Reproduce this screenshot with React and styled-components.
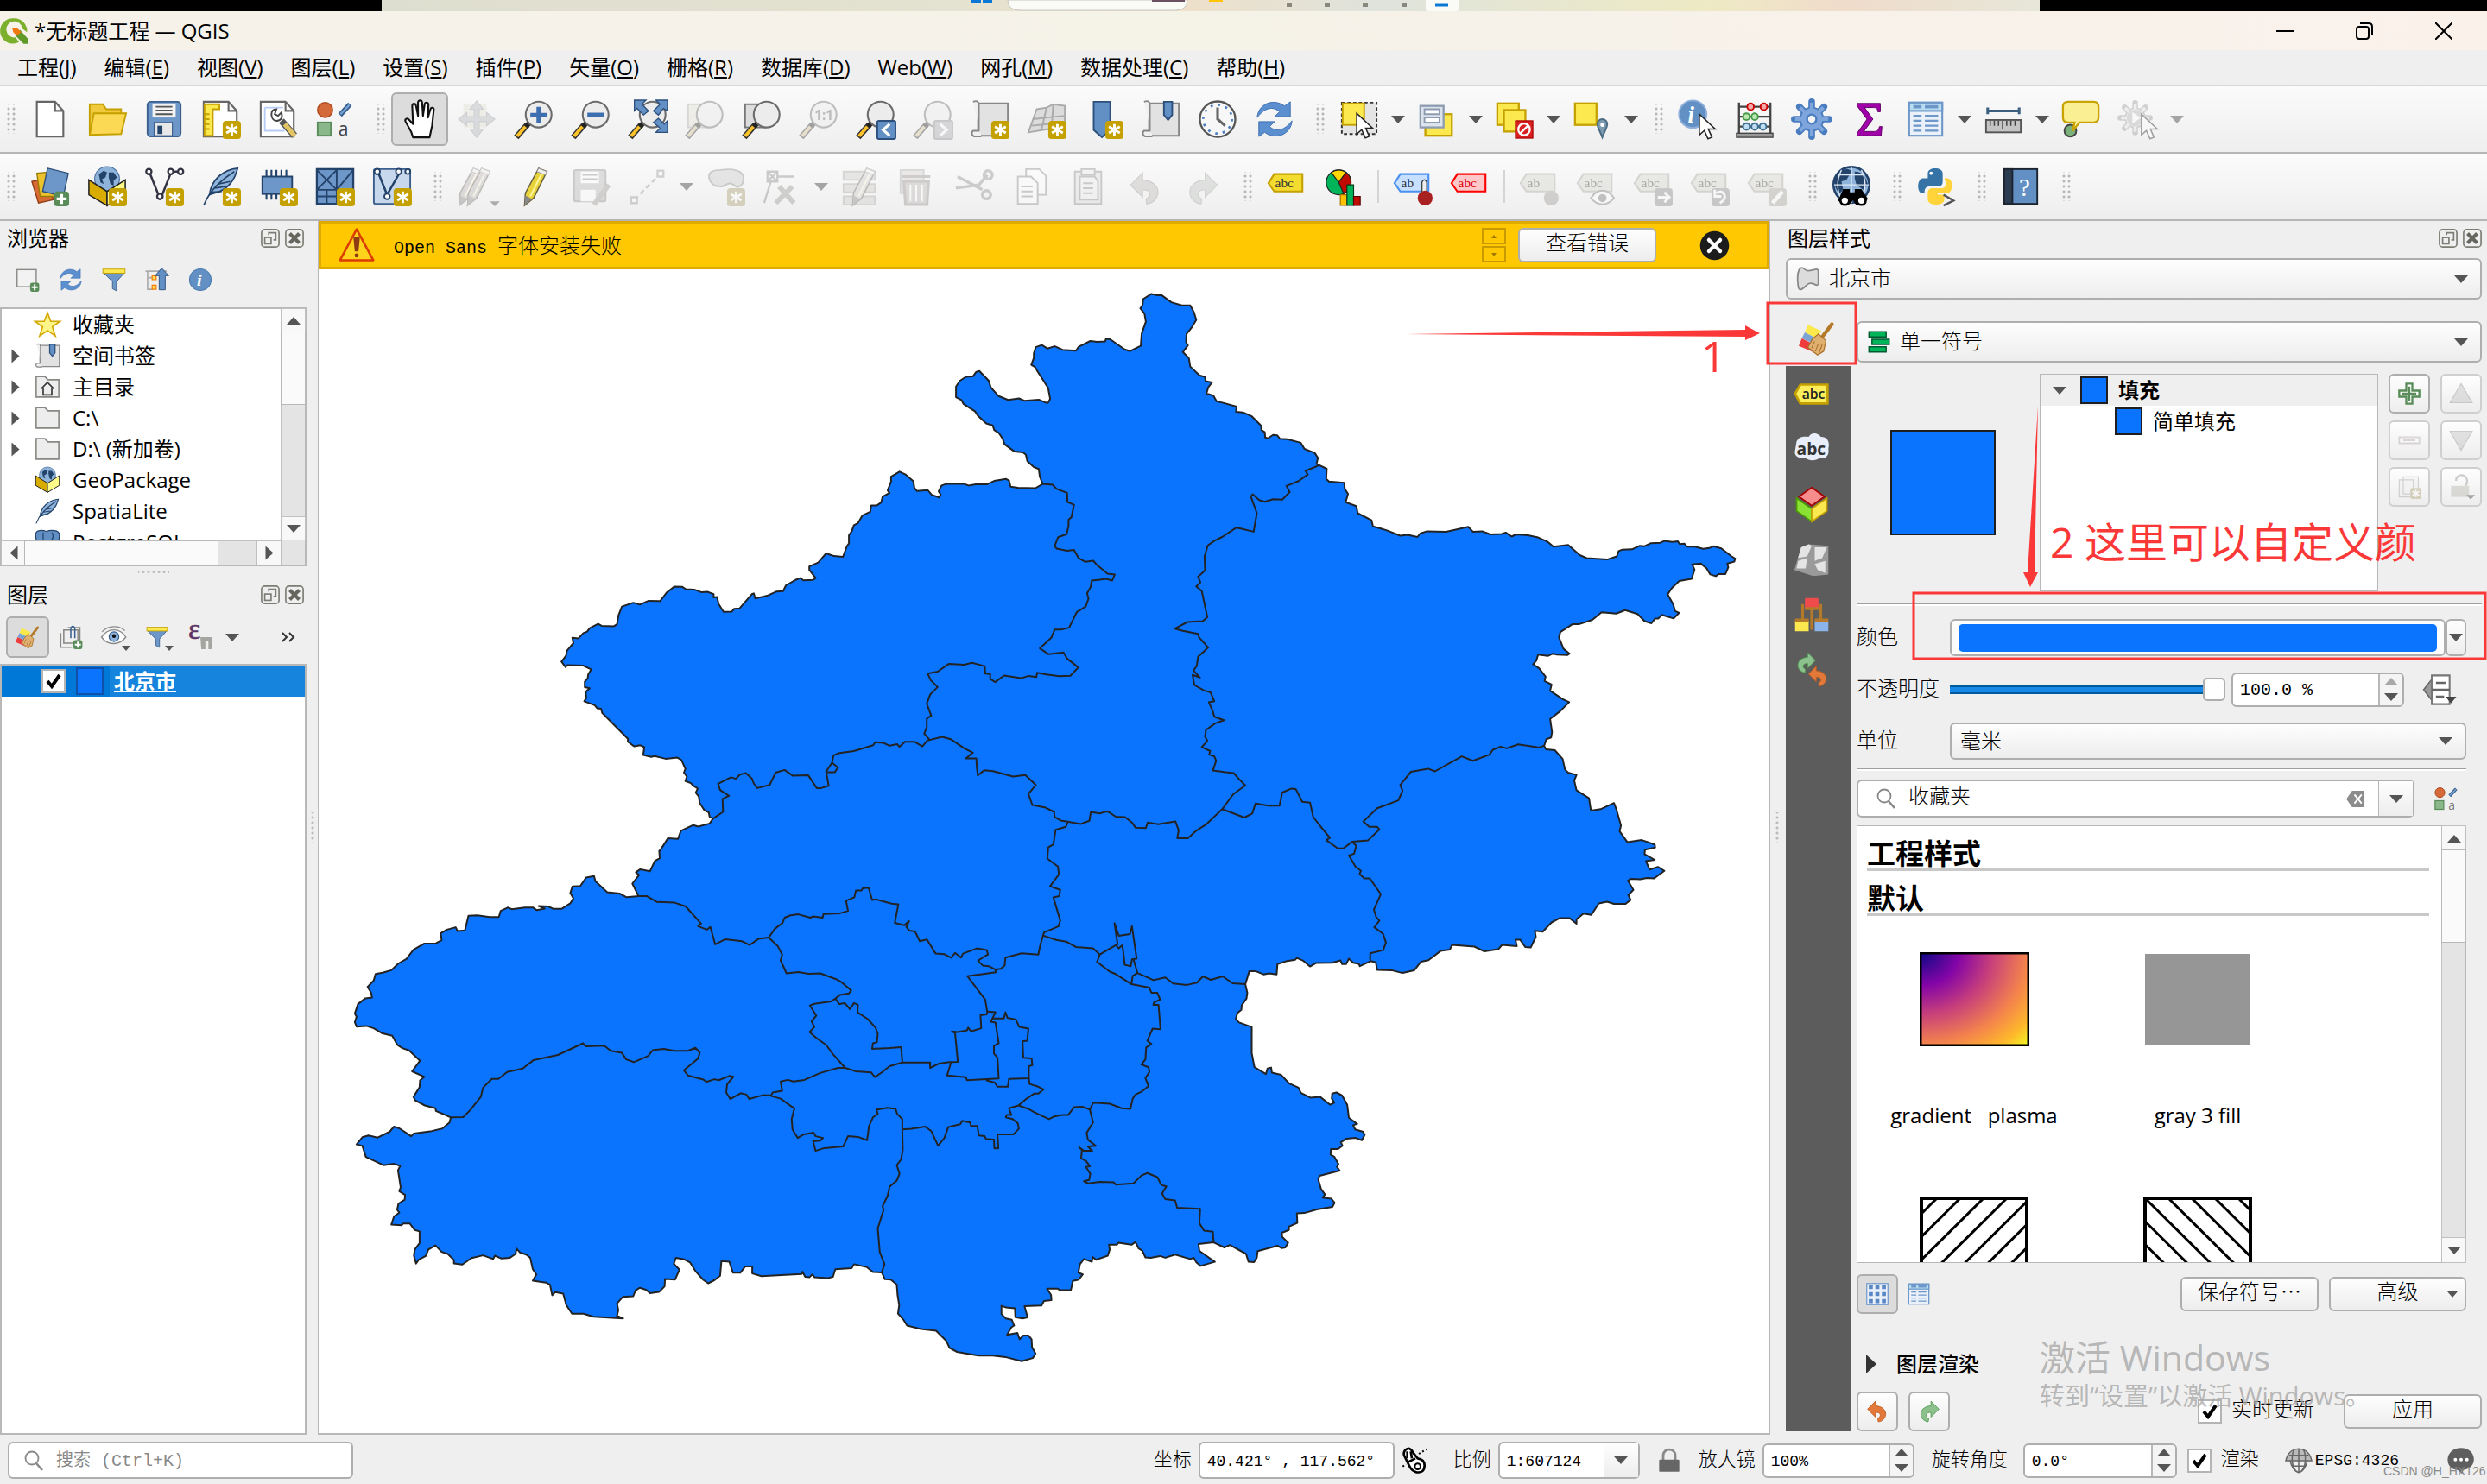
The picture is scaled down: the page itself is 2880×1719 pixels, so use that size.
import React, { useState } from "react";
import styled, { createGlobalStyle, css } from "styled-components";

const FILL = "#0a74ff";
const UI = `"Open Sans", "Noto Sans CJK SC", sans-serif`;
const FORM = `"Liberation Mono", "Noto Sans CJK SC", monospace`;

/* ---------- map data ---------- */

const sheets = {
  a: [380, 320, 900 / 1568, 700 / 1568],
  b: [1200, 320, 840 / 1568, 800 / 1568],
  c: [390, 980, 800 / 1568, 620 / 1568],
  d: [880, 980, 720 / 1568, 620 / 1568],
};

const outline = [
  ["a", "775,1407 768,1403 766,1391 757,1385 748,1367 746,1350 740,1340 744,1329 735,1322 730,1315 719,1310 722,1298 716,1288 719,1278 711,1255 703,1249 679,1252 657,1245 650,1247 634,1242 636,1222 628,1217 616,1220 603,1208 603,1200 551,1133 549,1122 541,1121 536,1113 515,1103 519,1095 518,1078 526,1069 516,1066 516,1052 522,1043 523,1033 529,1020 512,1010 481,1009 477,1014 469,1000 478,985 480,972 493,952 491,938 503,940 513,926 521,922 526,913 543,902 550,907 575,908 581,903 584,880 591,857 614,847 627,852 645,842 668,843 681,821 697,805 713,806 720,812 737,813 752,820 764,819 776,825 776,833 783,832 786,850 796,871 813,870 817,863 828,862 853,825 857,823 860,836 884,829 903,818 916,817 922,802 941,788 951,783 957,789 976,788 982,783 969,762 969,753 987,743 1003,719 1019,726 1037,728 1045,700 1049,693 1049,672 1055,661 1059,646 1067,641 1076,621 1092,611 1094,595 1105,595 1114,587 1117,572 1131,562 1127,556 1134,533 1134,520 1151,507 1164,515 1179,532 1181,549 1186,557 1208,555 1216,567 1231,574 1234,566 1230,558 1236,543 1245,539 1282,539 1290,543 1305,540 1327,540 1342,531 1366,526 1372,530 1375,546 1390,549 1425,550 1440,539 1434,520 1432,500 1422,495 1409,480 1406,463 1400,457 1383,455 1363,436 1359,421 1351,406 1342,399 1339,387 1326,382 1310,363 1303,350 1280,331 1276,321 1265,314 1265,286 1273,271 1285,261 1299,260 1306,248 1312,246 1331,271 1335,288 1351,311 1370,321 1392,317 1403,323 1432,320 1446,328 1451,328 1455,318 1451,290 1441,270 1430,248 1425,236 1417,230 1422,212 1422,200 1426,184"],
  ["b", "10,156 22,164 38,159 55,167 84,169 90,160 115,147 130,149 147,148 149,142 158,143 189,166 201,170 224,158 226,130 235,103 232,85 223,73 228,65 229,52 247,40 260,43 269,43 290,59 313,66 331,66 339,82 344,99 333,118 323,131 322,150 326,157 315,172 328,186 331,205 351,225 363,229 364,238 378,241 370,252 366,266 381,271 388,284 404,288 431,296 430,308 445,309 464,318 484,339 485,349 492,354 493,366 499,368 510,360 519,361 525,369 541,370 570,378 578,392 600,401 607,412 604,426 626,437 625,460 631,466 664,469 665,483 672,494 667,513 690,522 693,538 723,554 726,568 743,573 756,577 785,589 801,587 822,592 828,584 843,579 884,580 901,576 932,569 942,580 962,579 980,586 1004,585 1013,582 1026,591 1035,586 1061,588 1083,593 1104,603 1116,614 1148,610 1173,633 1188,640 1232,643 1253,636 1257,624 1264,621 1286,620 1303,612 1312,613 1327,606 1347,605 1356,601 1373,603 1385,602 1389,608 1399,607 1405,614 1422,614 1440,619 1453,617 1462,613 1479,618 1500,635 1509,641 1507,648 1492,652 1494,661 1488,676 1474,676 1467,681 1455,677 1447,663 1440,657 1435,652 1416,654 1421,666 1415,687 1388,692 1372,708 1363,722 1375,745 1379,760 1388,764 1376,777 1350,769 1343,777 1336,777 1328,788 1313,783 1298,767 1271,758 1252,766 1220,763 1200,780 1171,790 1157,790 1131,808 1128,820 1138,846 1151,857 1146,860 1124,859 1115,857 1104,862 1083,859 1079,873 1072,881 1085,890 1099,909 1097,919 1112,927 1109,941 1136,960 1150,967 1131,987 1109,1005 1113,1035 1111,1047 1101,1051 1096,1066 1100,1074 1119,1076 1136,1096 1141,1120 1148,1127 1166,1132 1161,1145 1166,1167 1193,1185 1197,1213 1218,1210 1247,1196 1252,1210 1262,1247 1259,1260 1276,1285 1307,1280 1335,1290 1336,1297 1314,1302 1313,1312 1335,1325 1316,1328 1324,1347 1342,1341 1356,1350 1334,1367 1318,1366 1304,1369 1283,1368 1277,1372 1289,1393 1278,1405 1283,1416 1272,1425 1247,1425 1232,1420 1214,1424 1198,1450 1181,1447 1166,1460 1166,1470 1151,1457 1130,1457 1112,1467 1093,1488 1076,1486 1078,1500 1067,1524 1055,1523 1044,1506 1034,1506 1037,1521 1005,1518 997,1528 967,1533 945,1522 897,1518 892,1529 872,1532 846,1553 830,1556 815,1576 790,1582 768,1576 735,1575"],
  ["d", "1554,360 1551,341 1538,337 1511,352 1508,345 1494,342 1483,330 1476,346 1466,346 1462,335 1441,342 1400,343 1385,353 1368,336 1352,328 1348,333 1324,338 1303,346 1301,376 1282,373 1268,376 1249,367 1232,367 1222,405 1227,430 1225,447 1213,466 1212,480 1202,489 1198,507 1206,517 1238,530 1238,607 1245,648 1274,668 1278,652 1287,649 1289,664 1312,670 1332,695 1356,708 1362,723 1386,737 1411,735 1436,758 1446,752 1440,740 1441,725 1452,722 1466,731 1479,758 1483,796 1504,814 1494,818 1499,830 1519,837 1523,846 1516,862 1500,855 1477,857 1463,868 1467,878 1455,888 1438,888 1437,904 1447,911 1457,932 1453,940 1460,951 1409,966 1406,977 1413,1005 1423,1021 1417,1030 1439,1033 1447,1045 1442,1057 1405,1064 1371,1075 1352,1076 1353,1104 1332,1115 1332,1125 1314,1133 1315,1145 1330,1162 1323,1176 1314,1178 1303,1171 1253,1187 1251,1206 1244,1219 1230,1218 1224,1195 1183,1169 1169,1176 1142,1161 1104,1166 1106,1186 1145,1218 1109,1230 1098,1219 1092,1206 1083,1210 1045,1197 1020,1206 1007,1201 983,1206 970,1205 962,1185 953,1179 945,1160 935,1168 902,1162 898,1168 878,1168 880,1182 875,1200 846,1212 837,1204 835,1218 815,1210 805,1225 801,1250 812,1255 802,1270 787,1274 782,1301 754,1301 749,1297 722,1297 732,1315 733,1330 714,1333 708,1346 665,1348 673,1381 660,1384 642,1380 641,1354 619,1352 607,1347 607,1371 618,1384 633,1388 639,1405 632,1410 621,1432 647,1426 653,1445 662,1434 675,1434 683,1445 684,1468 693,1487 686,1500 658,1509 617,1497 585,1493 549,1493 520,1487 495,1482 476,1470 468,1450 442,1420 404,1415 369,1405 360,1388 346,1370 349,1345 345,1315 343,1285 328,1270 313,1269 305,1249 283,1248 268,1234 235,1225 229,1237 188,1240 182,1262 168,1266 135,1263 130,1255 123,1263 112,1262 105,1247 103,1254"],
  ["c", "962,1260 941,1252 941,1232 925,1232 914,1250 897,1250 889,1218 871,1216 868,1259 855,1272 841,1281 829,1270 812,1245 800,1220 787,1211 768,1206 763,1224 776,1241 766,1270 743,1268 742,1290 730,1306 709,1310 700,1300 686,1294 676,1302 671,1319 647,1321 634,1340 637,1360 634,1376 648,1384 581,1379 558,1370 532,1370 519,1345 512,1311 494,1307 487,1316 482,1285 473,1279 443,1273 451,1255 443,1240 437,1206 428,1197 414,1191 406,1179 404,1195 391,1206 371,1208 357,1200 353,1210 330,1199 304,1207 283,1226 264,1223 264,1213 250,1195 236,1189 222,1170 206,1182 200,1201 184,1212 178,1223 173,1200 175,1182 186,1163 186,1129 175,1125 164,1106 149,1106 145,1111 122,1109 128,1085 140,1074 135,1065 138,1048 152,1036 153,1022 140,1011 143,1000 137,950 142,937 128,931 104,935 64,911 56,878 43,874 56,853 70,848 91,854 118,837 128,822 140,827 167,850 173,842 210,836 237,828 254,810 257,795 223,776 222,768 198,760 176,745 172,735 186,706 187,687 197,676 169,660 187,629 162,599 147,592 135,582 124,556 100,548 82,534 65,527 43,529 39,516 43,500 39,491 46,463 63,446 78,444 76,430 68,413 82,394 86,375 102,371 122,364 138,344 156,331 172,304 196,286 223,285 236,276 234,256 248,245 268,238 272,249 289,247 297,204 317,203 345,208 366,208 370,190 387,180 395,185 425,180 443,180 452,188 470,183 456,176 478,177 490,184 508,184 528,168 535,153 528,138 533,118 551,117 564,92 582,88 585,103 612,135 640,139 656,150 683,147 669,110 684,85 677,77 687,68 709,74 720,44 731,36 730,14"],
  ["a", "667,1492 684,1458 704,1460 710,1439 735,1424 745,1428 768,1420 775,1407"],
];

const districts = [
  [
    ["a", "1440,539 1460,541 1468,552 1489,562 1490,586 1503,593 1498,625 1492,632 1492,648 1488,669 1471,677 1464,700 1468,707 1489,712 1503,710 1512,731 1526,741 1542,738 1550,750 1568,769"],
    ["b", "152,675 168,677 162,691 150,687 118,691 116,705 108,720 111,732 105,750 86,762 69,798 52,802 38,802 31,820 6,845 25,858 57,854 65,868 89,888 72,907 48,908 20,904 0,900"],
    ["a", "1427,1040 1412,1037 1396,1043 1362,1036 1344,1053 1334,1045 1334,1032 1324,1031 1323,1012 1310,1007 1297,1003 1282,1008 1250,1006 1228,1026 1208,1031 1214,1048 1228,1066 1213,1085 1206,1109 1215,1140 1206,1148 1206,1170 1201,1187 1212,1203 1207,1205 1197,1220 1182,1208 1162,1208 1151,1221 1146,1214 1131,1218 1119,1211 1102,1209 1098,1217 1059,1232 1030,1237 1018,1243 1015,1262 1003,1285 1008,1322 993,1328 984,1328 967,1295 936,1296 919,1281 901,1288 889,1320 864,1328 857,1316 853,1303 841,1289 829,1293 821,1304 811,1300 785,1317 789,1333 807,1348 794,1356 795,1390 775,1407"],
  ],
  [["a", "1015,1262 1027,1275 1020,1287 1003,1287"]],
  [
    ["a", "1212,1203 1237,1195 1254,1201 1282,1225 1299,1236 1285,1251 1306,1251 1307,1275 1309,1295 1322,1282 1340,1284 1380,1298 1405,1294 1426,1320 1411,1343 1419,1372 1444,1378 1463,1390 1464,1403 1476,1412 1490,1415 1517,1421 1534,1413 1537,1390 1555,1394 1568,1389"],
    ["b", "154,1216 170,1227 190,1228 205,1240 213,1252 235,1253 239,1240 262,1244 299,1238 306,1258 303,1276 326,1276 345,1258 365,1245 400,1210 424,1176 450,1156 435,1140 425,1128 408,1126 380,1122 387,1100 383,1090 372,1086 374,1078 356,1069 368,1055 363,1045 365,1030 385,1015 404,1008 383,1000 379,985 371,967 383,965 375,945 360,940 340,928 336,905 352,911 338,895 345,885 348,864 370,843 350,820 348,812 315,805 298,800 325,785 358,783 368,774 360,735 356,715 344,704 353,695 348,682 363,668 362,636 369,611 384,600 400,592 430,571 440,573 468,580 475,538 462,500 466,495 480,508 492,512 510,506 530,507 546,490 539,476 565,465 585,450 580,442 608,430"],
  ],
  [["b", "400,1210 448,1229 465,1220 472,1197 500,1202 524,1202 530,1172 550,1163 559,1164 573,1193 590,1195 597,1228 615,1252 633,1275 625,1280 650,1299 662,1299 681,1284 715,1281 740,1256 735,1250 718,1250 705,1238 735,1208 781,1190 790,1168 785,1155 808,1125 845,1118 860,1124 918,1090 942,1100 978,1086 985,1075 1002,1068 1015,1072 1040,1063 1085,1070 1096,1066"]],
  [["b", "681,1284 690,1293 685,1311 674,1315 688,1340 700,1350 697,1357 707,1367 719,1367 743,1403 728,1438 733,1455 740,1463 729,1478 748,1493 754,1513 748,1530 720,1537 720,1553"]],
  [
    ["b", "66,1240 62,1250 40,1257 35,1290 24,1297 22,1322 45,1340 47,1358 28,1385 50,1393 48,1407 35,1410 50,1463 46,1476 15,1490"],
    ["d", "712,262 705,290 700,318 658,314 617,327 615,350 605,360 592,362 575,352 560,350 548,336 558,328 573,318 570,305 545,300 510,315 505,327 490,313 480,327 463,317 441,315 419,274 401,279 389,250 375,248 367,237 374,220 362,232 338,225 347,171 330,169 290,156 281,158 272,122 257,124 254,130 240,130 236,150 215,160 220,190 200,197 158,199 156,210 132,206 125,210 95,200 75,203 60,210 55,225 35,243 20,268 43,293 54,318 50,335 65,373 95,369 120,374 150,373 190,390 205,400 228,423 222,432 200,436 188,447 178,455 135,462 124,467 140,497 128,513 135,530 123,545 140,562 165,583 182,610 213,650 240,660 278,663 288,677 305,663 325,645 357,634"],
  ],
  [["d", "188,447 198,463 212,460 225,478 235,460 245,465 244,487 270,507 290,533 295,550 293,575 283,578 281,594 325,592 354,589 357,634 427,634 427,650 450,637 475,633 497,632 490,548 482,543 497,545 520,540 523,532 530,543 556,534 554,496 570,493 571,485 566,450 521,381 593,370 592,362"]],
  [["d", "213,650 195,650 150,665 110,685 82,690 68,685 50,690 54,717 30,722 25,732"]],
  [["c", "683,147 702,147 725,164 765,166 790,177 825,227 818,235 838,245 846,237 857,288 880,273 918,279 935,290 955,272 978,268"]],
  [["c", "257,795 285,794 300,775 325,735 330,708 350,682 365,682 385,662 420,652 445,627 500,612 557,578 563,587 605,585 620,600 645,606 655,625 672,633 705,615 715,598 740,594 765,600 795,600 812,591 822,605 818,623 786,657 795,672 830,684 837,691 855,683 865,686 890,673 898,676 884,698 882,722 891,741 915,724 928,728 934,741 965,730 986,731"]],
  [["d", "25,732 50,740 80,765 85,768 78,800 80,830 93,855 108,845 133,840 138,850 157,855 150,863 132,865 138,893 160,885 208,880 220,850 245,852 268,862 273,820 283,795 295,785 292,772 320,767 340,770 344,785 357,800 357,830 358,890 354,918 343,935 350,960 343,980 325,998 320,1025 307,1055 310,1065 295,1120 300,1190 312,1225 305,1249"]],
  [["d", "357,830 380,828 415,822 430,835 447,878 463,855 473,823 503,815 508,805 528,810 530,820 546,820 550,848 565,850 568,858 588,860 589,886 599,886 597,845 637,845 651,828 648,812 635,800 618,795 620,788 632,788 626,768 650,760 668,742 690,725 700,725 713,713 700,705 678,697 676,680"]],
  [["d", "650,760 675,770 690,780 705,788 727,800 740,792 760,788 775,788 790,765 812,764 830,772 838,752 880,755 910,768 932,770 938,740 945,728 960,720 978,703 970,680 980,662 978,648 960,640 970,625 972,590 985,580 975,570 988,535 1008,537 1003,465 990,465 992,458 1007,450 1000,430 985,430 980,415 935,405 895,375 880,368 848,340 855,318 838,300 795,296 770,280 745,275 712,262"]],
  [["d", "855,318 896,290 903,300 912,290 918,348 933,352 936,332 948,330 936,235 931,258 903,263 892,226 900,290"]],
  [["d", "940,332 950,372 938,380 935,402"]],
  [["d", "950,372 975,385 990,393 1020,385 1040,403 1075,407 1100,400 1115,382 1135,392 1165,382 1190,402 1222,405"]],
  [["d", "830,772 838,810 822,840 825,860 845,878 825,880 836,893 815,893 803,883 810,890 808,915 820,922 830,938 820,940 831,960 828,978 815,982 825,988 855,984 890,985 895,992 940,988 960,965 975,958 1000,970 1010,993 1023,997 1012,1018 1020,1034 1045,1038 1050,1060 1108,1063 1106,1105 1118,1127 1140,1130 1142,1161"]],
  [["d", "480,633 470,672 517,677 520,686 600,681 597,620 588,608 588,585 600,578 592,517 580,515 592,487 571,485"]],
  [["d", "585,505 613,505 617,487 622,503 643,508 652,530 675,535 672,570 660,572 662,620 683,622 685,642 676,645 676,680 626,682 623,705 597,705 590,693 568,686"]],
];

function toPath(parts) {
  const points = parts.flatMap(([sheet, list]) => {
    const [ox, oy, sx, sy] = sheets[sheet];
    return list.split(" ").map((p) => {
      const [x, y] = p.split(",").map(Number);
      return `${(ox + x * sx).toFixed(1)} ${(oy + y * sy).toFixed(1)}`;
    });
  });
  return "M" + points.join("L");
}

/* ---------- icons, all on a 24 grid ---------- */

const Badge = ({ x = 13, y = 13 }) => (
  <g>
    <rect x={x} y={y} width="11" height="11" rx="2" fill="#c4a000" />
    <path
      d={`M${x + 5.5} ${y + 2}v7M${x + 2.2} ${y + 3.6}l6.6 3.8M${x + 8.8} ${y + 3.6}l-6.6 3.8`}
      stroke="#fff"
      strokeWidth="1.5"
    />
  </g>
);

const PlusBadge = () => (
  <g>
    <rect x="14.5" y="15" width="9" height="9" rx="2" fill="#5a8c5a" />
    <path d="M19 16.5v6M16 19.5h6" stroke="#fff" strokeWidth="1.7" />
  </g>
);

const Lens = ({ children }) => (
  <g>
    <path d="M1.5 23L8 15.5" stroke="#333" strokeWidth="3.6" />
    <path d="M2 22.3L7 16.6" stroke="#fcc32a" strokeWidth="2" />
    <path d="M7.5 16.5l2.5-3" stroke="#222" strokeWidth="3" />
    <circle cx="15" cy="9.2" r="7.8" fill="#ececec" stroke="#6b6b6b" strokeWidth="1.1" />
    {children}
  </g>
);

const Cursor = ({ x = 0, y = 0 }) => (
  <path
    transform={`translate(${x} ${y})`}
    d="M0 0v12.500l3-2.600 2.200 5 2.400-1-2.200-4.900h4.200z"
    fill="#fff"
    stroke="#222"
    strokeWidth=".8"
  />
);

const Tag = ({ fill = "#f3dc2f", line = "#c4a000", text = "abc", color = "#333" }) => (
  <g>
    <path d="M1 10L4.500 4.500H21.500v10.500H4.500z" fill={fill} stroke={line} strokeWidth="1.100" />
    <text x="5" y="12.500" fontSize="8" fontFamily="Liberation Serif, serif" fill={color}>
      {text}
    </text>
  </g>
);

const Paper = ({ x = 4, w = 16 }) => (
  <path
    d={`M${x} 1.500h${w - 5}l5 5.500v15.500h-${w}zM${x + w - 5} 1.500v5.500h5`}
    fill="#fff"
    stroke="#666"
    strokeWidth="1.1"
  />
);

const Globe = ({ cx = 12, cy = 8, r = 7 }) => (
  <g>
    <circle cx={cx} cy={cy} r={r} fill="#8fb4dc" stroke="#4a6f9c" strokeWidth=".6" />
    <path
      d={`M${cx - 5} ${cy - 3}l3-2 2 1-1 3-2 1 1 3-2-1zM${cx + 1} ${cy - 4}l3 0 2 3-2 2 0 3-2-1-1-4z`}
      fill="#24436b"
    />
  </g>
);

const Feather = () => (
  <g>
    <path d="M22 1C13 2 6 8 5 17l3-1c8-2 12-7 14-15z" fill="#8fb4dc" stroke="#24436b" strokeWidth=".9" />
    <path d="M20 3C12 8 5 14 1.500 23.500M8 13l7-1M10.500 10.500l7-1.500M6.500 15.500l6-.5" stroke="#24436b" strokeWidth=".9" fill="none" />
  </g>
);

const Brush = () => (
  <g>
    <path d="M6 3l9 4-3 5-8-4z" fill="#fbe94c" />
    <path d="M4 8l8 4-1 4-9-4z" fill="#7ba3d3" />
    <path d="M2 12l8 4 2 6-12-5z" fill="#ef3b3b" />
    <path d="M15.500 11L22 2.500" stroke="#b47a2a" strokeWidth="2.400" strokeLinecap="round" />
    <path d="M9 12.500l4-3.500 5 4.500-1.500 7-4 2.500-6.500-5z" fill="#dfb070" stroke="#a8702a" strokeWidth=".7" />
    <path d="M10.500 14l-2 4.500M13 15.500l-2 5M15.500 16l-2 5.500" stroke="#a8702a" strokeWidth=".6" />
  </g>
);

const Sync = () => (
  <g fill="#5b8fd0" stroke="#3c6eb0" strokeWidth=".5">
    <path d="M1.500 11C2 3 11-1 18 4l3.500-2.500v9H12l3-3C11 4 6 5 1.500 11z" />
    <path d="M22.500 13C22 21 13 25 6 20l-3.500 2.500v-9H12l-3 3c4 3.500 9 2.500 13.500-3.500z" />
  </g>
);

const Styles = () => (
  <g>
    <circle cx="6" cy="6.500" r="4.500" fill="#d4693a" stroke="#b04a1c" strokeWidth=".8" />
    <path d="M15 9.500L21 3" stroke="#35608f" strokeWidth="3" />
    <path d="M15.300 9L20.700 3.400" stroke="#7ba3d3" strokeWidth="1.200" />
    <rect x="1.500" y="14" width="8" height="8" fill="#8ab88a" stroke="#5a8c5a" />
    <text x="14" y="22" fontSize="11" fontFamily="Open Sans, sans-serif" fill="#444">a</text>
  </g>
);

const Funnel = () => (
  <g>
    <path d="M1.500 5h21l-8 9v9l-4-2v-7z" fill="#6c97c8" stroke="#3c5f8c" strokeWidth=".8" />
    <rect x="1" y="1.500" width="22" height="4" fill="#fce94f" stroke="#c4a000" strokeWidth=".8" />
  </g>
);

const Pencil = ({ x = 0, fill = "#e8d33a" }) => (
  <g transform={`translate(${x} 0)`}>
    <path d="M13 1l5 2-8 16-5.500 4.500.5-7.500z" fill={fill} stroke="#6b6340" strokeWidth=".8" />
    <path d="M15.500 3L8 18" stroke="#fff6a0" strokeWidth="1" />
    <path d="M4.500 23.500l.5-6 4 2z" fill="#888" />
    <path d="M13 1l5 2-1 2-5-2z" fill="#eee" stroke="#999" strokeWidth=".5" />
  </g>
);

const Gear = ({ fill = "#7ea6dc", line = "#4a7cc0" }) => (
  <g>
    {[0, 45, 90, 135].map((a) => (
      <path key={a} d="M12 1.500v21" stroke={line} strokeWidth="4" strokeLinecap="round" transform={`rotate(${a} 12 12)`} />
    ))}
    <circle cx="12" cy="12" r="7.500" fill={line} />
    {[0, 45, 90, 135].map((a) => (
      <path key={a} d="M12 2v20" stroke={fill} strokeWidth="2.200" transform={`rotate(${a} 12 12)`} />
    ))}
    <circle cx="12" cy="12" r="6.500" fill={fill} />
    <circle cx="12" cy="12" r="2.800" fill="#f4f4f4" stroke={line} strokeWidth="1.200" />
  </g>
);

const Table = () => (
  <g>
    <rect x="2" y="2" width="20" height="20" fill="#eaf1fa" stroke="#6c97c8" strokeWidth="1.100" />
    <rect x="2" y="2" width="20" height="5" fill="#b8dcf0" stroke="#6c97c8" strokeWidth="1.100" />
    <path d="M4.500 4.500h5M11.500 4.500h8" stroke="#6c97c8" strokeWidth="2" />
    <path d="M4.500 10h5M11.500 10h8M4.500 13h5M11.500 13h8M4.500 16h5M11.500 16h8M4.500 19h5M11.500 19h8" stroke="#6c97c8" strokeWidth="1.200" />
  </g>
);

const Box = () => (
  <g>
    <Globe cx={12} cy={7.500} r={7.500} />
    <path d="M1 8l11 7v8.500L1 17z" fill="#d8ac00" stroke="#222" strokeWidth=".8" />
    <path d="M23 8l-11 7v8.500L23 17z" fill="#fdfa8a" stroke="#222" strokeWidth=".8" />
  </g>
);

const Undo = ({ fill = "#e2793a", line = "#c05a1c" }) => (
  <path d="M10 1L1.500 9.500 10 18v-5c5.500-.5 7 4 2.500 6.500l.5 3.500c10-1 12-16-3-17z" fill={fill} stroke={line} strokeWidth=".8" />
);

const Redo = ({ fill = "#8cc08c", line = "#4f9a4f" }) => (
  <g transform="matrix(-1 0 0 1 24 0)">
    <Undo fill={fill} line={line} />
  </g>
);

const Book = () => (
  <g>
    <path d="M5 2.500h18v19.500H5z" fill="#e2e2e2" stroke="#888" />
    <path d="M2 1.500c2.500-1 3.500 0 3.500 2V19H2c-1.500 1.500-.5 3.500 1.500 3.500H7" fill="#f0f0f0" stroke="#888" />
  </g>
);

const Folder = () => <path d="M1.500 2.500h8l3 3h10v16h-21z" fill="#ededed" stroke="#888884" strokeWidth="1.300" />;

const Mesh = ({ line = "#aaa" }) => (
  <path
    d="M6 6l6-1 4-2 7 1 0 15-10-1-12 2zM12 5l-3 13M16 3l-1 15M4 12l8-1 11-1M3 16l9-1 11 0"
    fill="#dcdcdc"
    stroke={line}
  />
);

const Abc = () => (
  <g>
    <path d="M2 7c2-4 6-3 8-3 2-4 7-2 8 0 5 0 6 4 5 8 1 5-3 7-6 6-2 2-7 2-9 0-5 1-8-2-7-5z" fill="#e9effa" />
    <text x="2" y="16" fontSize="11" fontWeight="700" fontFamily="Open Sans, sans-serif" fill="#333">abc</text>
  </g>
);

const icons = {
  qgis: (
    <g>
      <path d="M11 1a11 11 0 1 0 4 20.500l-3-4A7 7 0 1 1 18 10l4 3A11 11 0 0 0 11 1z" fill="#7cb02c" />
      <path d="M12 12l4-1 7 8v4h-4l-7-7z" fill="#5f9a28" />
      <path d="M9 9l4 0 4 4-4 3-3-3z" fill="#ee7913" />
    </g>
  ),
  newDoc: <Paper />,
  open: (
    <g>
      <path d="M1.500 21V3h8l2 3h9v4" fill="#f0c93c" stroke="#c4a000" />
      <path d="M1.500 21.500L4 8.500h19.500l-3 12.500z" fill="#fcd955" stroke="#c4a000" />
    </g>
  ),
  save: (
    <g>
      <rect x="2" y="1.500" width="20" height="21" rx="2" fill="#6c97c8" stroke="#3c5f8c" />
      <rect x="5" y="2.500" width="14" height="8.500" fill="#f2f2f2" />
      <path d="M7 4.500h10M7 6.700h10M7 9h10" stroke="#555" />
      <rect x="6" y="14" width="11" height="8" fill="#e8e8e8" stroke="#3c5f8c" strokeWidth=".6" />
      <rect x="8" y="16" width="3" height="5" fill="#24436b" />
    </g>
  ),
  layout: (
    <g>
      <Paper x={1.500} w={20} />
      <path d="M2 3h9v3H7v16H2z" fill="#fce94f" stroke="#c4a000" />
      <path d="M2 9h3M2 12h3M2 15h3M2 18h3" stroke="#c4a000" />
      <Badge />
    </g>
  ),
  reports: (
    <g>
      <Paper x={1.500} w={20} />
      <path d="M4 5h11M4 5v14h12" stroke="#b8cdf5" fill="none" />
      <path d="M14 13l8 9" stroke="#555" strokeWidth="4" />
      <path d="M16 15l6 7" stroke="#e3c565" strokeWidth="2.800" />
      <path d="M8 9c0-2 1-3 3-3l-1 3 2 1 2-2c1 3 0 5-3 5-2 0-3-2-3-4z" fill="#fff" stroke="#444" />
    </g>
  ),
  styles: <Styles />,
  pan: (
    <path
      d="M7 23L6 20 2.500 13.500c-.8-1.600 1.200-2.500 2-1.200L7 15 6.500 4c0-1.800 2-1.800 2.300 0L10 10V2c0-1.700 2.300-1.700 2.500 0l.5 8 1-7c.3-1.600 2.300-1.300 2.300.3L16 11l1.500-5c.5-1.500 2.300-1 2 .6L18.500 16 17 23z"
      transform="translate(1 0)"
      fill="#fff"
      stroke="#111"
      strokeWidth="1.100"
      strokeLinejoin="round"
    />
  ),
  panSel: (
    <g>
      <rect x="4" y="3" width="14" height="14" fill="#e8e2b8" />
      <path d="M12 1l4 5h-2.500v4.500H18V8l5 4-5 4v-2.500h-4.500V18H16l-4 5-4-5h2.500v-4.500H6V16l-5-4 5-4v2.500h4.500V6H8z" fill="#a6b6cc" stroke="#8a98aa" strokeWidth=".6" />
    </g>
  ),
  zoomIn: <Lens><path d="M15 4.500v10M10 9.500h10" stroke="#3c6eb0" strokeWidth="2.600" /></Lens>,
  zoomOut: <Lens><path d="M10 9.500h10" stroke="#3c6eb0" strokeWidth="2.800" /></Lens>,
  zoomFull: (
    <g>
      <Lens />
      <path d="M4 .5h7L8.500 3l4 4-3 2.500-4-4L4 7zM24 .5h-7L19.500 3l-4 4 3 2.500 3-4L24 7zM24 20h-7l2.500-2.500-4-3.500 3-2.500 3.500 3.500L24 13z" fill="#6290c4" stroke="#2c4f7c" strokeWidth=".7" />
    </g>
  ),
  zoomSel: <g><rect x="2" y="3" width="12" height="14" fill="#e8e2b8" stroke="#aaa" /><Lens /></g>,
  zoomLayer: <g><rect x="2" y="3" width="12" height="14" fill="#ddd" stroke="#777" /><Lens /></g>,
  zoomNative: <Lens><text x="9.500" y="12.500" fontSize="8" fontWeight="700" fontFamily="Open Sans, sans-serif" fill="#666">1:1</text></Lens>,
  zoomLast: <g><Lens /><rect x="13" y="13" width="11" height="11" rx="1" fill="#6290c4" stroke="#2c4f7c" /><path d="M20.500 15l-4 3.500 4 3.500" stroke="#fff" strokeWidth="1.600" fill="none" /></g>,
  zoomNext: <g><Lens /><rect x="13" y="13" width="11" height="11" rx="1" fill="#aab" stroke="#889" /><path d="M16.500 15l4 3.500-4 3.500" stroke="#fff" strokeWidth="1.600" fill="none" /></g>,
  bookNew: <g><Book /><Badge /></g>,
  meshNew: <g><Mesh /><Badge /></g>,
  markNew: <g><path d="M6 1.500h10v17l-5 4.500-5-4.500z" fill="#6290c4" stroke="#2c4f7c" /><Badge /></g>,
  bookMark: <g><Book /><path d="M14 1.500h5v8l-2.500 3-2.500-3z" fill="#6290c4" stroke="#2c4f7c" /></g>,
  clock: (
    <g>
      <circle cx="12" cy="12" r="10.700" fill="#f7f7f7" stroke="#555" strokeWidth="1.200" />
      <circle cx="12" cy="12" r="8.700" fill="none" stroke="#4a7cc0" strokeWidth="1.400" strokeDasharray="1.400 3.150" />
      <path d="M12 5v7l4.500 4" stroke="#666" strokeWidth="1.600" fill="none" />
    </g>
  ),
  sync: <Sync />,
  select: (
    <g>
      <rect x="1.500" y="2" width="21" height="19" fill="#e4e4e4" stroke="#333" strokeDasharray="2 1.400" />
      <rect x="2" y="2.500" width="13" height="13" fill="#fce94f" stroke="#c4a000" />
      <Cursor x={10.500} y={8.500} />
    </g>
  ),
  selForm: (
    <g>
      <rect x="5" y="9" width="16" height="13" fill="#fce94f" stroke="#c4a000" strokeWidth="1.200" />
      <rect x="2" y="4" width="14" height="13" fill="#dde3ec" stroke="#8d9bb0" strokeWidth="1.200" />
      <path d="M4 7.500h10M4 12.500h10" stroke="#8d9bb0" strokeWidth="4" />
      <path d="M5 7.500h8M5 12.500h8" stroke="#fff" strokeWidth="2" />
    </g>
  ),
  deselect: (
    <g>
      <rect x="1.500" y="2.500" width="13" height="13" fill="#fce94f" stroke="#c4a000" strokeWidth="1.200" />
      <rect x="5.500" y="6.500" width="13" height="13" fill="#fce94f" stroke="#c4a000" strokeWidth="1.200" />
      <rect x="12.500" y="13" width="10.500" height="10.500" fill="#d82020" stroke="#a00" strokeWidth=".6" />
      <circle cx="17.700" cy="18.200" r="3.500" fill="none" stroke="#fff" strokeWidth="1.200" />
      <path d="M15.300 20.700l5-5" stroke="#fff" strokeWidth="1.200" />
    </g>
  ),
  selLoc: (
    <g>
      <rect x="1.500" y="2.500" width="13" height="13" fill="#fce94f" stroke="#c4a000" strokeWidth="1.200" />
      <path d="M18 23c-2-5-3-6-3-8a3 3 0 0 1 6 0c0 2-1 3-3 8z" fill="#7a9ab0" stroke="#4a6a80" />
      <circle cx="18" cy="15.500" r="1.200" fill="#fff" />
    </g>
  ),
  identify: (
    <g>
      <circle cx="9" cy="9" r="8.300" fill="#6290c4" stroke="#8fb0da" />
      <text x="6" y="14" fontSize="14" fontStyle="italic" fontWeight="700" fontFamily="Liberation Serif, serif" fill="#fff">i</text>
      <Cursor x={13} y={9} />
    </g>
  ),
  abacus: (
    <g>
      <path d="M2.500 2v19M21.500 2v19M2 4.500h20M2 10.500h20M2 16.500h20" stroke="#444" strokeWidth="1.200" />
      <rect x="1" y="20.500" width="22" height="2.500" fill="#999" stroke="#444" strokeWidth=".7" />
      <g fill="#f4a8a8" stroke="#c00"><circle cx="9.500" cy="4.500" r="2" /><circle cx="17.500" cy="4.500" r="2" /></g>
      <g fill="#b8e8b0" stroke="#4a9a4a"><circle cx="7" cy="10.500" r="2" /><circle cx="12" cy="10.500" r="2" /></g>
      <g fill="#c0dcf0" stroke="#3c6e90"><circle cx="7" cy="16.500" r="2" /><circle cx="12" cy="16.500" r="2" /><circle cx="17" cy="16.500" r="2" /></g>
    </g>
  ),
  gear: <Gear />,
  sigma: <path d="M5 2.500h14v5h-1.500c0-2-1-2.500-2.500-2.500H9.500l5 7-5.500 7.500h6.500c2 0 2.500-1 3-3H20l-.5 5.500H5v-1.500L11 12 5 4z" fill="#a000a8" stroke="#5a0060" strokeWidth=".5" />,
  table: <Table />,
  measure: (
    <g>
      <path d="M2.500 7h19M2.500 5v4M21.500 5v4" stroke="#3c5f80" strokeWidth="1.600" />
      <rect x="1.500" y="12.500" width="21" height="7.500" fill="#c4c4c4" stroke="#555" />
      <path d="M4 13v3M6.500 13v3M9 13v3M11.500 13v5M14 13v3M16.500 13v3M19 13v3" stroke="#444" strokeWidth=".8" />
    </g>
  ),
  tip: (
    <g>
      <circle cx="5.500" cy="19" r="3.600" fill="#7ab07a" stroke="#444" />
      <path d="M4 1.500h15.500q3 0 3 3v6.500q0 3-3 3H11L7 19l1-5H4q-3 0-3-3V4.500q0-3 3-3z" fill="#fbef94" stroke="#c9a400" strokeWidth="1.200" />
    </g>
  ),
  action: <g><g transform="translate(0 1) scale(.85)"><Gear fill="#e4e4e4" line="#999" /><circle cx="12" cy="12" r="6" fill="#b0b4bc" /><path d="M10 8l6 4-6 4z" fill="#fff" /></g><Cursor x={14} y={9} /></g>,
  dataSource: (
    <g>
      <path d="M1 9l9-2 4 13-9 2z" fill="#d86a34" stroke="#8f3c14" strokeWidth=".7" />
      <path d="M4 4l11-1 1 15-10 0z" fill="#ecc32c" stroke="#9a7a00" strokeWidth=".7" />
      <path d="M10.500 1l12.500 3-3 14-12.500-3z" fill="#6c97c8" stroke="#2c4f7c" strokeWidth=".7" />
      <PlusBadge />
    </g>
  ),
  gpkg: <g><Box /><Badge /></g>,
  shape: (
    <g>
      <path d="M3 3l6 15M10.500 18L16 4M16 3h5" stroke="#334" strokeWidth="1.300" fill="none" />
      <g fill="#fff" stroke="#334" strokeWidth="1.200"><circle cx="2.800" cy="3" r="1.600" /><circle cx="9.500" cy="18" r="1.700" /><circle cx="16" cy="3" r="1.600" /><circle cx="22" cy="3" r="1.600" /></g>
      <Badge />
    </g>
  ),
  featherNew: <g><Feather /><Badge /></g>,
  feather: <Feather />,
  memory: (
    <g>
      <path d="M5 2v18M8 2v18M11 2v18M14 2v18M17 2v18" stroke="#24436b" strokeWidth="1.100" />
      <rect x="2.500" y="6" width="18" height="10.500" fill="#6c97c8" stroke="#24436b" />
      <Badge />
    </g>
  ),
  mesh: (
    <g>
      <rect x="1" y="1.500" width="22" height="21" fill="#6c97c8" stroke="#24436b" strokeWidth="1.200" />
      <path d="M1 14h22M13 1.500v21M1 2l12 12M13 2L1 14M13 14L23 2M7 14v8.500M1 18h12" stroke="#24436b" />
      <Badge />
    </g>
  ),
  virtual: (
    <g>
      <rect x="1" y="1.500" width="22" height="21" rx="1" fill="#c8d8ec" stroke="#3c5f8c" />
      <path d="M3 2l6 15L17 3" stroke="#24436b" strokeWidth="1.300" fill="none" />
      <g fill="#fff" stroke="#24436b"><circle cx="3" cy="3" r="1.700" /><circle cx="9" cy="18" r="1.700" /><circle cx="16" cy="3" r="1.700" /><circle cx="21.500" cy="3" r="1.500" /></g>
      <Badge />
    </g>
  ),
  pencils: <g><Pencil x={-3} fill="#c8b0a8" /><Pencil x={2} fill="#c8b0a8" /><path d="M20 21h6l-3 3z" fill="#444" /></g>,
  pencil: <Pencil x={2} />,
  saveEdit: (
    <g>
      <rect x="2" y="2" width="19" height="19" rx="1" fill="#b8b8b8" stroke="#888" />
      <rect x="6" y="3" width="11" height="7" fill="#fff" />
      <path d="M7 5h9M7 7.500h9" stroke="#888" />
      <rect x="6" y="14" width="9" height="7" fill="#fff" />
      <path d="M23 11l-9 12" stroke="#a89890" strokeWidth="3" />
    </g>
  ),
  line: <g><path d="M4 20L20 4" stroke="#999" strokeWidth="1.300" strokeDasharray="3 2" /><path d="M2 18.500h3.500V22H2zM18 2.500h3.500V6H18z" fill="#fff" stroke="#999" strokeWidth="1.300" /></g>,
  polyNew: <g><path d="M3 9c-3-6 2-7 6-7 7-1 14 0 14 5 0 4-3 7-6 4-3-2-4 0-7 1-3 0-5 0-7-3z" fill="#c4ccc4" stroke="#888" /><Badge /></g>,
  vertex: <g><path d="M3 3h6v6H3zM3 3l6 6M9 3L3 9M9 6h10M5 9L1 22" stroke="#888" fill="none" strokeWidth="1.200" /><path d="M8 22L18 12M10 12l9 10" stroke="#998" strokeWidth="3" /></g>,
  tableEdit: <g><path d="M2 3h19v5H2zM2 10.500h19v5H2zM2 18h19v5H2z" fill="#d0ccbc" stroke="#aaa598" /><Pencil x={3} fill="#d8c8c0" /></g>,
  trash: <g><path d="M2 2h14v14H2z" fill="#d8d4c4" stroke="#aaa" /><path d="M4 9h15l-1 14H5zM3 6h17" fill="#c8b0b0" stroke="#a88" strokeWidth="1.600" /><path d="M8 11v10M11.500 11v10M15 11v10" stroke="#fff" /></g>,
  cut: <g stroke="#998c8c" fill="none" strokeWidth="1.800"><path d="M2 6l15 8M1 13l14-2 5-6" /><circle cx="20.500" cy="5" r="2.500" /><circle cx="19.500" cy="17" r="2.500" /></g>,
  copy: <g fill="#fff" stroke="#888"><path d="M9 1.500h8l4 4V17H9z" /><path d="M4 6h8l4 4v12.500H4z" /><path d="M6 12h7M6 15h7M6 18h7" /></g>,
  paste: <g fill="#eee" stroke="#888"><path d="M4 3h16v19.500H4z" fill="#ddd" /><path d="M8 6h8l2 3v11H7V6z" /><path d="M8 1.500h8V5H8z" /><path d="M9 10h6M9 13h6M9 16h6" /></g>,
  undoOff: <g transform="translate(2 3) scale(.85)"><Undo fill="#c8b8b0" line="#a89890" /></g>,
  redoOff: <g transform="translate(2 3) scale(.85)"><Redo fill="#b8c4b8" line="#98a898" /></g>,
  tag: <Tag />,
  diagram: (
    <g transform="translate(1 0)">
      <circle cx="8" cy="9.500" r="7.500" fill="#00b45a" stroke="#222" strokeWidth=".6" />
      <path d="M8 9.500L3.500 3.500A7.500 7.500 0 0 1 12.500 3.500z" fill="#ffd800" stroke="#222" strokeWidth=".6" />
      <path d="M8 9.500l4.500-6A7.500 7.500 0 0 1 11 16.300z" fill="#c00c00" stroke="#222" strokeWidth=".6" />
      <path d="M9 17h4v6.500H9z" fill="#ffc000" stroke="#a07000" strokeWidth=".6" />
      <path d="M13 11h4v12.500h-4z" fill="#00b45a" stroke="#003c1c" strokeWidth=".6" />
      <path d="M17 18h4v5.500h-4z" fill="#c00c00" stroke="#500" strokeWidth=".6" />
    </g>
  ),
  tagPin: <g><Tag fill="#c8e0ff" line="#4a90f0" text="ab" /><path d="M17.500 16V9.500q1.500-3 3 0V16" fill="#eee" stroke="#444" strokeWidth=".8" /><circle cx="19.500" cy="19" r="4.500" fill="#a82020" /></g>,
  tagRed: <Tag fill="#ffc8c8" line="#f00" color="#d00" />,
  tagOffPin: <g><Tag fill="#d8d4c0" line="#aaa58c" text="ab" /><circle cx="19.500" cy="19" r="4.500" fill="#a89890" /></g>,
  tagOffEye: <g><Tag fill="#d8d4c0" line="#aaa58c" /><path d="M9 19c4-6 10-6 14 0-4 5-10 5-14 0z" fill="#fff" stroke="#777" /><circle cx="16" cy="19" r="2.500" fill="#777" /></g>,
  tagOffMove: <g><Tag fill="#d8d4c0" line="#aaa58c" /><rect x="13" y="13" width="11" height="11" rx="2" fill="#888" /><path d="M15 18.500h7M19 15.500l3 3-3 3" stroke="#fff" strokeWidth="1.500" fill="none" /></g>,
  tagOffTurn: <g><Tag fill="#d8d4c0" line="#aaa58c" /><rect x="13" y="13" width="11" height="11" rx="2" fill="#888" /><path d="M18 22c6-3 2-9-2-6M15 14v4h4" stroke="#fff" strokeWidth="1.500" fill="none" /></g>,
  tagOffEdit: <g><Tag fill="#d8d4c0" line="#aaa58c" /><rect x="13" y="13" width="11" height="11" rx="2" fill="#a8a48c" /><path d="M21.500 15l-6 7" stroke="#fff" strokeWidth="2.400" /></g>,
  search: (
    <g>
      <circle cx="12" cy="11" r="10.800" fill="#8fb4dc" stroke="#24436b" strokeWidth="1.400" />
      <path d="M4 4c4-3 7-3 8-1l-3 5-3 1 1 5-2 2C1 13 1 7 4 4zM14 3c5 0 7 4 8 8l-3 3-4-3-1-4z" fill="#24436b" />
      <path d="M1.500 11h21M12 0v22M4 5h16M6 2c-3 6-3 12 0 18M18 2c3 6 3 12 0 18" stroke="#dce8f4" strokeWidth=".7" fill="none" />
      <path d="M7 13.500h4v2h3v-2h4l4 6-4 4h-3l-2-3-3 3H7l-3-3z" fill="#000" />
      <circle cx="8" cy="20.500" r="2.600" fill="#fff" stroke="#000" strokeWidth="1.400" />
      <circle cx="18" cy="20.500" r="2.600" fill="#fff" stroke="#000" strokeWidth="1.400" />
    </g>
  ),
  python: (
    <g>
      <path d="M7 7V4c0-4 9-4 9 0v5c0 2-1 3-3 3H8c-2 0-3 1-3 4H3c-3-2-2-9 1-9h7" fill="#3572a5" />
      <path d="M17 7h2c4 1 3 9 0 9h-6v1h4v3c0 4-10 4-10 0v-4c0-2 1-3 3-3h5c2 0 3-1 3-3z" fill="#ffd43b" />
      <circle cx="9" cy="4" r="1" fill="#fff" />
      <path d="M16.500 17l6 3.500-6 3" stroke="#555" strokeWidth="1.300" fill="none" />
    </g>
  ),
  help: (
    <g>
      <rect x="2" y="1.500" width="20" height="21" fill="#6290c4" stroke="#1c2430" />
      <rect x="2" y="1.500" width="5" height="21" fill="#2c3c50" stroke="#1c2430" />
      <text x="11" y="17.500" fontSize="15" fontFamily="Liberation Serif, serif" fill="#fff">?</text>
    </g>
  ),
  addLayer: <g><rect x="1.500" y="2" width="19" height="17" fill="#f2f2f2" stroke="#888884" strokeWidth="1.200" /><PlusBadge /></g>,
  funnel: <Funnel />,
  collapse: <g><path d="M.5 3.500h21M2.500 3.500v18h5M2.500 10h5" stroke="#aaa" strokeWidth="1.400" fill="none" /><path d="M7 8h4v4H7zM7 17.500h4v4H7z" fill="#fcd955" stroke="#f57900" /><path d="M16.500.5l7 7.500H20v14h-6V8h-4z" fill="#6290c4" stroke="#2c4f7c" strokeWidth=".8" /></g>,
  info: <g><circle cx="12" cy="12" r="10.700" fill="#6290c4" stroke="#4a7cb0" /><text x="8.500" y="18" fontSize="17" fontStyle="italic" fontWeight="700" fontFamily="Liberation Serif, serif" fill="#fff">i</text></g>,
  star: <path d="M12 1l3 8h8.500l-7 5 2.800 8.500L12 17.500 4.700 22.500l2.800-8.500-7-5H9z" fill="#fdf58a" stroke="#d4a800" strokeWidth="1.300" />,
  home: <g><Folder /><path d="M6 14l6-6 6 6M8 13v6.500h8V13" fill="none" stroke="#333" strokeWidth="1.300" /></g>,
  folder: <Folder />,
  box: <Box />,
  elephant: <path d="M1 5c0-5 7-4 10-3 3-1 12-2 12 3 0 4-1 9-4 12h-4v5h-4l-1-6-4 1C3 14 1 9 1 5zM8 3v8M16 3c2 3 1 6-1 8" fill="#6290c4" stroke="#24436b" />,
  brush: <Brush />,
  group: <g><path d="M2 8v14h11M5 5v13h14V5zM9 2.500h12V15" fill="none" stroke="#888884" strokeWidth="1.300" /><path d="M12 13V3q2-4 4 0v10" stroke="#35608f" strokeWidth="1.300" fill="none" /><PlusBadge /></g>,
  eye: <g><path d="M.5 12c6-9 17-9 22.500 0-6 8-17 8-22.500 0z" fill="#fff" stroke="#888" strokeWidth="1.100" /><circle cx="12" cy="11.500" r="4.500" fill="#8fb4dc" stroke="#35608f" /><circle cx="12" cy="11" r="1.800" fill="#111" /><path d="M1 7C7 1 17 1 22 6" stroke="#888" fill="none" /></g>,
  epsilon: <g><text x="0" y="14" fontSize="29" fontFamily="Liberation Serif, serif" fill="#5c3566" stroke="#5c3566" strokeWidth=".5">ε</text><path d="M12 12h12l-1 12h-3v-8h-3v8h-4z" fill="#a4a4a0" /></g>,
  polygon: <path d="M3 3c3-5 5 1 9 1 5 0 10-4 10 1v12c-1 4-6-3-10 0-4 3-9 10-10 2C1 12 1 7 3 3z" fill="#dcdcdc" stroke="#888" strokeWidth="1.500" />,
  single: <path d="M2 2h17v5H2zM5 9.500h17v5H5zM2 17h17v5H2z" fill="#00b45a" stroke="#005a30" strokeWidth="1.300" />,
  labels: <g><path d="M1 12L4.500 6H22.500v12.500H4.500z" fill="#fcee5a" stroke="#c4a000" strokeWidth="1.500" /><text x="5.500" y="15.500" fontSize="9" fontWeight="600" fontFamily="Open Sans, sans-serif" fill="#222">abc</text></g>,
  abc: <Abc />,
  cube: <g><path d="M12 1l8.500 6-8.500 6-8.500-6z" fill="#f78c8c" stroke="#a40000" /><path d="M2 8l10 7v8.500L2 16.500z" fill="#8ae234" stroke="#4e9a06" /><path d="M22 8l-10 7v8.500l10-7z" fill="#fce94f" stroke="#c4a000" /></g>,
  terrain: <g><path d="M5 4l5-2 13 1v19l-10 1L.5 19z" fill="#9a9a9a" /><path d="M5 4l5-2 2 1-3 7-6 1zM14 4l8 0-3 7-5 2zM3 13l6-2-1 7-6 0zM14 15l7-2v8l-5-2z" fill="#e4e4e4" /></g>,
  brushes: <g><path d="M6 5v12M18 5v12M12 8v14" stroke="#b47a2a" strokeWidth="1.800" /><path d="M7.500 1h9v7h-9z" fill="#ef4b4b" /><path d="M1 16h9v7H1z" fill="#fce94f" /><path d="M14 16h9v7h-9z" fill="#8ab4ea" /><path d="M7.500 8h9M1 15.500h9M14 15.500h9" stroke="#b47a2a" strokeWidth="2" /></g>,
  history: <g><g transform="translate(1 0) scale(.6)"><Redo /></g><g transform="translate(9 9) scale(.6)"><Undo /></g></g>,
  plus: <path d="M9 2h6v7h7v6h-7v7H9v-7H2V9h7zM12 5v14M5 12h14" fill="#fff" stroke="#5a8c5a" strokeWidth="2" />,
  minus: <path d="M2 9h20v6H2zM6 12h12" fill="#fff" stroke="#c8a0a0" strokeWidth="1.600" />,
  up: <path d="M12 2l11 19H1z" fill="#b8bcc4" stroke="#888" />,
  down: <path d="M12 22L1 3h22z" fill="#b8bcc4" stroke="#888" />,
  dup: <g><path d="M2 5h14v17H2zM6 2h15v17H6z" fill="#eee" stroke="#999" /><Badge /></g>,
  unlock: <g><path d="M7 6c0-8 11-7 11 0 0 2-1 3-1 5" fill="none" stroke="#888" strokeWidth="2" /><rect x="2" y="11" width="18" height="11" fill="#b8b090" /><path d="M17 20h9l-4.500 4.500z" fill="#333" /></g>,
  override: <g><path d="M8 3v18L1 12z" fill="#999" stroke="#666" /><path d="M7 1.500h13v21H7z" fill="#fff" stroke="#777" strokeWidth="1.300" /><path d="M7 12h13M10 7h7M10 17h6" stroke="#666" strokeWidth="1.600" /><path d="M17 17h8l-4 5z" fill="#444" /></g>,
  grid: <g><rect x="1.500" y="1.500" width="21" height="21" fill="#eaf1fa" stroke="#6c97c8" />{[3, 10, 17].map((y) => <path key={y} d={`M3.500 ${y}h4v4h-4zM10 ${y}h4v4h-4zM16.500 ${y}h4v4h-4z`} fill="#5a88c4" />)}</g>,
  undo: <Undo />,
  redo: <Redo />,
  extents: <g><path d="M3 3q4-4 7 2l4 5q6 1 6 6 0 7-7 6-4-1-6-5L3 9Q1 6 3 3z" fill="#fff" stroke="#000" strokeWidth="2" /><path d="M5 4v6M8 4l1 6M6 13l6-3" stroke="#000" strokeWidth="2" /><circle cx="14" cy="17" r="2.500" fill="#fff" stroke="#000" strokeWidth="1.500" /><path d="M15 6l7-4M1 17l3-2" stroke="#000" strokeWidth="1.500" strokeDasharray="1.500 2" /></g>,
  lock: <g><path d="M6 12V7c0-8 12-8 12 0v5" fill="none" stroke="#8a8a8a" strokeWidth="2.400" /><rect x="2" y="11" width="20" height="12" rx="1" fill="#666" /></g>,
  crs: <g fill="none" stroke="#666" strokeWidth="1.200"><path d="M0 12C2 3 8 1 12 1s10 2 12 11z" fill="#bbb" /><path d="M4 12c1 5 4 10 8 11 4-1 7-6 8-11M12 1v22M8 1c-3 5-3 15 1 20M16 1c3 5 3 15-1 20M3 7h18M6 17h12" /></g>,
  bubble: <g><path d="M12 1C-3 1-3 20 9 20l4 3.500 1-3.500C27 19 26 1 12 1z" fill="#5e5e5e" /><circle cx="7" cy="11" r="1.500" fill="#fff" /><circle cx="12" cy="11" r="1.500" fill="#fff" /><circle cx="17" cy="11" r="1.500" fill="#fff" /></g>,
  lens: <g fill="none" stroke="#888"><circle cx="10" cy="9" r="7.500" strokeWidth="1.800" /><path d="M15 15l7 8" strokeWidth="2.600" /></g>,
  clear: <path d="M8 2h15v20H8L1 12z M11 7l8 10M19 7l-8 10" fill="#8c8c8c" stroke="#fff" strokeWidth="1.800" />,
  warning: <g><path d="M12 2L1.500 21.500h21z" fill="#ffd21c" stroke="#dc3c00" strokeWidth="1.400" strokeLinejoin="round" /><path d="M10.500 7.500h3l-.8 8h-1.400z" fill="#8f3c14" stroke="#8f3c14" strokeWidth="1" /><circle cx="12" cy="18.500" r="1.300" fill="#8f3c14" /></g>,
  close: <g><circle cx="12" cy="12" r="11.500" fill="#1c1c1c" /><path d="M7.500 7.500l9 9M16.500 7.500l-9 9" stroke="#fff" strokeWidth="3" strokeLinecap="round" /></g>,
  dockFloat: <g fill="none" stroke="#7c7c74" strokeWidth="1.800"><rect x="1" y="1" width="22" height="22" rx="4" /><rect x="5" y="11" width="8" height="8" /><path d="M10 8V5h9v9h-3" /></g>,
  dockClose: <g fill="none" stroke="#7c7c74" strokeWidth="1.800"><rect x="1" y="1" width="22" height="22" rx="4" /><path d="M6 6l12 12M18 6L6 18" stroke="#66665e" strokeWidth="4.500" /></g>,
};

const Svg = styled.svg`
  display: block;
  flex: none;
  width: ${(p) => p.$size}px;
  height: ${(p) => p.$size}px;
  overflow: visible;
  opacity: ${(p) => (p.$dim ? 0.4 : 1)};
  filter: ${(p) => (p.$dim ? "grayscale(0.7)" : "none")};
`;

function Icon({ name, size = 28, dim }) {
  return (
    <Svg viewBox="0 0 24 24" fill="none" $size={size} $dim={dim} aria-hidden="true">
      {icons[name]}
    </Svg>
  );
}

/* ---------- shared pieces ---------- */

const GlobalStyle = createGlobalStyle`
  * { box-sizing: border-box; }
  body {
    margin: 0;
    background: #efefef;
    color: #000;
    font: 24px/36px ${UI};
  }
  button, input, select { font: inherit; color: inherit; margin: 0; }
  button { padding: 0; }
`;

const raised = css`
  border: 2px solid #aeaeae;
  border-radius: 6px;
  background: linear-gradient(#fefefe, #ededed);
`;

const Triangle = styled.span`
  display: block;
  flex: none;
  width: 0;
  height: 0;
  border: ${(p) => p.$size || 8}px solid transparent;
  border-top: ${(p) => (p.$size || 8) + 1}px solid ${(p) => p.$color || "#555"};
  border-bottom: 0;
  transform: rotate(${(p) => p.$turn || 0}deg);
`;

const PlainButton = styled.button`
  display: flex;
  align-items: center;
  justify-content: center;
  border: 0;
  background: none;
`;

const PushButton = styled.button`
  ${raised}
  display: flex;
  align-items: center;
  justify-content: center;
  width: ${(p) => p.$width || 48}px;
  height: ${(p) => p.$height || 46}px;
  font: 300 24px/32px ${FORM};
  border-color: ${(p) => (p.disabled ? "#cfcfcf" : "#aeaeae")};
  ${(p) => p.$pressed && "background: #dcdcdc;"}
`;

const Page = styled.div`
  position: relative;
  display: flex;
  flex-direction: column;
  min-height: 100vh;
  border-bottom: 2px solid #b5b0a6;
`;

const Gap = styled.span`
  flex: 1;
`;

const Dots = styled.div`
  align-self: center;
  flex: none;
  width: ${(p) => (p.$tall ? 6 : 36)}px;
  height: ${(p) => (p.$tall ? 36 : 13)}px;
  background: radial-gradient(circle, #bcbcbc 1px, transparent 2px) center / 6px ${(p) => (p.$tall ? 6 : 13)}px;
`;

/* ---------- window top ---------- */

const Desktop = styled.div`
  display: flex;
  justify-content: center;
  height: 13px;
  overflow: hidden;
  border: solid #000;
  border-width: 0 518px 0 442px;
  background: linear-gradient(90deg, #deded0, #e4e2d0 35%, #f0e0c8 47%, #dfe3dc 60%, #eeeac4 80%, #f0dccb 88%, #e6e6d8);
`;

const TitleBar = styled.header`
  display: flex;
  align-items: center;
  height: 45px;
  padding: 0 22px 0 2px;
  background: linear-gradient(90deg, #f6f2ea, #f5f2e8 50%, #faf1eb);
`;

const Title = styled.h1`
  flex: 1;
  margin: 0 0 0 6px;
  font-size: 24px;
  font-weight: 400;
  line-height: 40px;
`;

const WindowButton = styled(PlainButton)`
  width: 56px;
  height: 45px;
  margin-left: 36px;
`;

const MenuBar = styled.nav`
  display: flex;
  gap: 32px;
  height: 42px;
  padding: 0 20px;
  border-bottom: 2px solid #d8d8d8;
  line-height: 38px;
  white-space: nowrap;

  button {
    border: 0;
    background: none;
  }
`;

const Bar = styled.div`
  display: flex;
  align-items: center;
  height: 78px;
  border-bottom: 2px solid #b5b5b5;
  background: linear-gradient(#fbfbfb, #eeeeee);
`;

const Handle = styled.span`
  flex: none;
  width: ${(p) => (p.$first ? 25 : 32)}px;
  height: 34px;
  padding-left: ${(p) => (p.$first ? 8 : 15)}px;
  padding-right: 5px;
  background: radial-gradient(circle, #b8b8b8 1px, transparent 2px) right 6px center / 6px 6px;
  background-clip: content-box;
`;

const Divider = styled.span`
  width: 2px;
  height: 38px;
  margin: 0 6px;
  background: #d4d4d4;
`;

const ToolButton = styled(PlainButton)`
  flex: none;
  width: 66px;
  height: 62px;
  ${(p) => p.$on && "border: 2px solid #aeaeae; border-radius: 6px; background: #dcdcdc;"}
`;

const MenuArrow = styled(PlainButton)`
  width: 24px;
  height: 62px;
`;

// "*" is the active tool, "-" dims the icon, a trailing "+" adds a drop-down
const topTools = [
  ["newDoc", "open", "save", "layout", "reports", "styles"],
  ["*pan", "-panSel", "zoomIn", "zoomOut", "zoomFull", "-zoomSel", "zoomLayer", "-zoomNative", "zoomLast", "-zoomNext", "bookNew", "meshNew", "markNew", "bookMark", "clock", "sync"],
  ["select+", "selForm+", "deselect+", "selLoc+"],
  ["identify", "abacus", "gear", "sigma", "table+", "measure+", "tip", "-action+"],
];

const editTools = [
  ["dataSource", "gpkg", "shape", "featherNew", "memory", "mesh", "virtual"],
  ["-pencils", "pencil", "-saveEdit", "-line+", "-polyNew", "-vertex+", "-tableEdit", "-trash", "-cut", "-copy", "-paste", "-undoOff", "-redoOff"],
  ["tag", "diagram", "|", "tagPin", "tagRed", "|", "-tagOffPin", "-tagOffEye", "-tagOffMove", "-tagOffTurn", "-tagOffEdit"],
  ["search"],
  ["python"],
  ["help"],
  [],
];

function Toolbar({ groups, label }) {
  return (
    <Bar role="toolbar" aria-label={label}>
      {groups.map((group, g) => (
        <React.Fragment key={g}>
          <Handle $first={g === 0} />
          {group.map((item, i) => {
            if (item === "|") return <Divider key={i} />;
            const name = item.replace(/[-+*]/g, "");
            const dim = item.startsWith("-");
            return (
              <React.Fragment key={i}>
                <ToolButton aria-label={name} $on={item.startsWith("*")} disabled={dim}>
                  <Icon name={name} size={46} dim={dim} />
                </ToolButton>
                {item.endsWith("+") && (
                  <MenuArrow aria-label={`${name} menu`}>
                    <Triangle $color={dim ? "#a4a4a4" : "#555"} />
                  </MenuArrow>
                )}
              </React.Fragment>
            );
          })}
        </React.Fragment>
      ))}
    </Bar>
  );
}

const menus = [["工程", "J"], ["编辑", "E"], ["视图", "V"], ["图层", "L"], ["设置", "S"], ["插件", "P"], ["矢量", "O"], ["栅格", "R"], ["数据库", "D"], ["Web", "W"], ["网孔", "M"], ["数据处理", "C"], ["帮助", "H"]];

function WindowTop() {
  return (
    <>
      <Desktop>
        <svg width="600" height="13">
          <path d="M23 0h11v3H23zM36 0h11v3H36z" fill="#0a78d4" />
          <path d="M65 0q0 12 14 12h180q14 0 14-12z" fill="#fafaf6" stroke="#c8c8c0" />
          <path d="M232 0h38v2h-38z" fill="#6a5060" />
          <path d="M298 0h16v2h-16z" fill="#ffc400" />
          <rect x="549" y="-6" width="38" height="19" rx="3" fill="#fafaf6" />
          <path d="M560 6h15" stroke="#0a78d4" strokeWidth="3" />
          <path d="M388 6h6M432 6h6M476 6h6M521 6h6" stroke="#88887c" strokeWidth="4" />
        </svg>
      </Desktop>
      <TitleBar>
        <Icon name="qgis" size={32} />
        <Title>*无标题工程 — QGIS</Title>
        <WindowButton aria-label="最小化">
          <svg width="20" height="20"><path d="M0 10h20" stroke="#000" strokeWidth="2" /></svg>
        </WindowButton>
        <WindowButton aria-label="还原">
          <svg width="20" height="20" fill="none" stroke="#000" strokeWidth="2">
            <rect x="1" y="5" width="14" height="14" rx="3" />
            <path d="M5 1h10q4 0 4 4v10" />
          </svg>
        </WindowButton>
        <WindowButton aria-label="关闭">
          <svg width="20" height="20"><path d="M0 0l20 20M20 0L0 20" stroke="#000" strokeWidth="2" /></svg>
        </WindowButton>
      </TitleBar>
      <MenuBar>
        {menus.map(([text, key]) => (
          <button key={text}>{text}(<u>{key}</u>)</button>
        ))}
      </MenuBar>
      <Toolbar groups={topTools} label="工程工具栏" />
      <Toolbar groups={editTools} label="编辑工具栏" />
    </>
  );
}

/* ---------- left docks ---------- */

const Main = styled.main`
  display: flex;
  flex: 1;
  min-height: 0;
`;

const LeftDocks = styled.aside`
  display: flex;
  flex: 0 0 359px;
  flex-direction: column;
  padding-right: 4px;
`;

const Splitter = styled.div`
  display: flex;
  flex: 0 0 9px;
`;

const DockTitle = styled.h2`
  display: flex;
  align-items: center;
  gap: 6px;
  height: 40px;
  margin: 0;
  padding: 0 ${(p) => p.$right ?? 3}px 0 ${(p) => p.$left ?? 8}px;
  font-size: 24px;
  font-weight: 400;

  span {
    flex: 1;
  }
`;

const DockTools = styled.div`
  display: flex;
  align-items: center;
  height: 60px;
  padding: ${(p) => p.$pad || "0 0 4px 7px"};
`;

const SmallTool = styled(PlainButton)`
  position: relative;
  width: 50px;
  height: 48px;
  ${(p) => p.$on && "border: 2px solid #aeaeae; border-radius: 6px; background: #dcdcdc;"}

  ${Triangle} {
    position: absolute;
    right: 6px;
    bottom: 8px;
  }
`;

const Frame = styled.div`
  border: 2px solid #b8b8b8;
  background: #fff;
`;

const BrowserFrame = styled(Frame)`
  display: grid;
  grid-template-columns: 1fr 28px;
  grid-template-rows: 268px 28px;
`;

const Tree = styled.ul`
  margin: 0;
  padding: 0;
  overflow: hidden;
  list-style: none;
`;

const TreeRow = styled.li`
  display: grid;
  grid-template-columns: 38px 44px 1fr;
  align-items: center;
  height: 36px;
  white-space: nowrap;

  ${Triangle} {
    margin-left: 8px;
  }
`;

const Scroll = styled.div`
  display: flex;
  flex-direction: ${(p) => (p.$row ? "row" : "column")};
  border: solid #c0c0c0;
  border-width: ${(p) => (p.$row ? "1px 0 0" : "0 0 0 1px")};
  background: #e4e4e4;
`;

const ScrollButton = styled(PlainButton)`
  flex: 0 0 ${(p) => p.$size || 27}px;
  background: #f8f8f8;
  outline: 1px solid #c0c0c0;
`;

const Thumb = styled.span`
  flex: 0 0 ${(p) => p.$part}%;
  background: #fafafa;
  outline: 1px solid #b8b8b8;
`;

const LayerFrame = styled(Frame)`
  flex: 1;
`;

const LayerRow = styled.label`
  display: flex;
  align-items: center;
  gap: 12px;
  height: 36px;
  padding-left: 46px;
  background: linear-gradient(90deg, #0078d7 125px, #1683dc 125px);
  color: #fff;
  font-weight: 700;
  text-decoration: underline;
`;

const Swatch = styled.span`
  flex: none;
  width: 32px;
  height: 32px;
  border: 2px solid ${(p) => p.$line || "#1f1f1f"};
  background: ${FILL};
`;

const CheckWrap = styled.span`
  display: grid;
  flex: none;

  > * {
    grid-area: 1 / 1;
  }

  input {
    width: 28px;
    height: 28px;
    appearance: none;
    border: 2px solid #b4b4b4;
    background: #fff;
  }

  svg {
    place-self: center;
    pointer-events: none;
  }

  input:not(:checked) + svg {
    display: none;
  }
`;

function Check() {
  return (
    <CheckWrap>
      <input type="checkbox" defaultChecked />
      <svg width="18" height="18" fill="none" stroke="#000" strokeWidth="4"><path d="M2 9l5 6L16 2" /></svg>
    </CheckWrap>
  );
}

function DockHead({ title, ...rest }) {
  return (
    <DockTitle {...rest}>
      <span>{title}</span>
      <PlainButton aria-label="浮动"><Icon name="dockFloat" size={22} /></PlainButton>
      <PlainButton aria-label="关闭面板"><Icon name="dockClose" size={22} /></PlainButton>
    </DockTitle>
  );
}

const browserItems = [["star", "收藏夹"], ["bookMark", "空间书签", 1], ["home", "主目录", 1], ["folder", "C:\\", 1], ["folder", "D:\\ (新加卷)", 1], ["box", "GeoPackage"], ["feather", "SpatiaLite"], ["elephant", "PostgreSQL"]];

function Docks() {
  return (
    <LeftDocks>
      <DockHead title="浏览器" />
      <DockTools>
        {["addLayer", "sync", "funnel", "collapse", "info"].map((n) => (
          <SmallTool key={n} aria-label={n}><Icon name={n} size={28} /></SmallTool>
        ))}
      </DockTools>
      <BrowserFrame>
        <Tree>
          {browserItems.map(([icon, text, branch]) => (
            <TreeRow key={text}>
              {branch ? <Triangle $turn={-90} /> : <span />}
              <Icon name={icon} size={30} />
              <span>{text}</span>
            </TreeRow>
          ))}
        </Tree>
        <Scroll>
          <ScrollButton aria-label="向上"><Triangle $turn={180} /></ScrollButton>
          <Thumb $part={31} />
          <Gap />
          <ScrollButton aria-label="向下"><Triangle /></ScrollButton>
        </Scroll>
        <Scroll $row>
          <ScrollButton aria-label="向左"><Triangle $turn={90} /></ScrollButton>
          <Thumb $part={69} />
          <Gap />
          <ScrollButton aria-label="向右"><Triangle $turn={-90} /></ScrollButton>
        </Scroll>
        <Scroll />
      </BrowserFrame>
      <Dots />
      <DockHead title="图层" />
      <DockTools $pad="0 0 2px 7px">
        <SmallTool aria-label="样式" $on><Icon name="brush" size={28} /></SmallTool>
        <SmallTool aria-label="添加组"><Icon name="group" size={28} /></SmallTool>
        <SmallTool aria-label="可见性"><Icon name="eye" size={30} /><Triangle $size={5} /></SmallTool>
        <SmallTool aria-label="过滤"><Icon name="funnel" size={26} /><Triangle $size={5} /></SmallTool>
        <SmallTool aria-label="表达式"><Icon name="epsilon" size={28} /></SmallTool>
        <MenuArrow aria-label="表达式菜单"><Triangle /></MenuArrow>
        <Gap />
        <PlainButton aria-label="更多">
          <svg width="30" height="12" fill="none" stroke="#333" strokeWidth="2"><path d="M2 1l5 5-5 5M10 1l5 5-5 5" /></svg>
        </PlainButton>
      </DockTools>
      <LayerFrame>
        <LayerRow>
          <Check />
          <Swatch $line="#1050a8" />
          北京市
        </LayerRow>
      </LayerFrame>
    </LeftDocks>
  );
}

/* ---------- map canvas ---------- */

const CanvasColumn = styled.section`
  display: flex;
  flex: 1;
  flex-direction: column;
  min-width: 0;
  border: solid #b8b8b8;
  border-width: 0 1px 2px 1px;
  background: #fff;
`;

const Message = styled.div`
  display: flex;
  align-items: center;
  height: 56px;
  padding: 0 43px 0 19px;
  border: 3px solid #dfab00;
  background: #ffc800;
  font: 300 24px/32px ${FORM};

  p {
    flex: 1;
    margin: 0;
    padding: 6px 0 0 21px;
  }
`;

const Latin = styled.span`
  font-size: 20px;
`;

const MiniSpin = styled.span`
  display: flex;
  flex-direction: column;
  gap: 2px;
  margin-right: 14px;

  button {
    width: 28px;
    height: 19px;
    border: 2px solid #c99a00;
    background: #ffc800;
  }
`;

const CloseMessage = styled(PlainButton)`
  margin-left: 50px;
`;

const MapSvg = styled.svg`
  display: block;
  flex: 1;
  width: 100%;
  min-height: 0;
`;

function MapCanvas() {
  return (
    <CanvasColumn>
      <Message role="alert">
        <Icon name="warning" size={44} />
        <p><Latin>Open Sans </Latin>字体安装失败</p>
        <MiniSpin>
          <PlainButton aria-label="上一条"><Triangle $size={3} $turn={180} $color="#a07800" /></PlainButton>
          <PlainButton aria-label="下一条"><Triangle $size={3} $color="#a07800" /></PlainButton>
        </MiniSpin>
        <PushButton $width={160} $height={40}>查看错误</PushButton>
        <CloseMessage aria-label="关闭消息"><Icon name="close" size={35} /></CloseMessage>
      </Message>
      <MapSvg viewBox="368 312 1680 1348" fill="none" stroke="#232323" strokeWidth="2" strokeLinejoin="round">
        <path d={toPath(outline) + "Z"} fill={FILL} />
        {districts.map((d, i) => (
          <path key={i} d={toPath(d)} />
        ))}
      </MapSvg>
    </CanvasColumn>
  );
}

/* ---------- styling panel ---------- */

const StyleDock = styled.aside`
  display: flex;
  flex: 0 0 830px;
  padding-right: 6px;
`;

const DockSplitter = styled.div`
  display: flex;
  flex: 0 0 18px;
  padding-left: 5px;
`;

const StylePanel = styled.div`
  display: flex;
  flex: 1;
  flex-direction: column;
  min-width: 0;
`;

const TopCombo = styled.div`
  display: grid;
  padding-top: 3px;
`;

const StyleBody = styled.div`
  display: flex;
  flex: 1;
  margin: 13px 0 4px;
`;

const Tabs = styled.div`
  flex: 0 0 76px;
  background: #5c5c5c;
`;

const Tab = styled(PlainButton)`
  width: 76px;
  height: 64px;
  padding-right: 16px;
  ${(p) => p.$on && "background: #efefef; padding-right: 4px;"}
`;

const Form = styled.div`
  display: flex;
  flex: 1;
  flex-direction: column;
  min-width: 0;
  padding: 12px 0 0 6px;
  font: 300 24px/32px ${FORM};
`;

const SelectBox = styled.span`
  ${raised}
  position: relative;
  display: flex;
  flex: ${(p) => (p.$grow ? 1 : "none")};
  align-items: center;
  gap: 10px;
  height: ${(p) => p.$height || 48}px;
  padding-left: 10px;

  select {
    flex: 1;
    align-self: stretch;
    min-width: 0;
    padding: 4px 0 0;
    border: 0;
    outline: 0;
    appearance: none;
    background: none;
    font: 300 24px/32px ${FORM};
  }

  > ${Triangle} {
    position: absolute;
    right: 14px;
    pointer-events: none;
  }
`;

function Combo({ id, label, value, icon, ...rest }) {
  return (
    <SelectBox {...rest}>
      {icon && <Icon name={icon} size={28} />}
      <select id={id} aria-label={label} defaultValue={value}>
        <option>{value}</option>
      </select>
      <Triangle />
    </SelectBox>
  );
}

const SymbolRow = styled.div`
  display: flex;
  gap: 12px;
  height: 252px;
  margin-top: 13px;
`;

const Preview = styled.div`
  display: flex;
  align-items: center;
  justify-content: center;
  flex: 0 0 200px;

  span {
    width: 122px;
    height: 122px;
    border: 2px solid #1f1f1f;
    background: ${FILL};
  }
`;

const SymbolTree = styled(Tree)`
  flex: 1;
  border: 1px solid #b8b8b8;
  background: #fff;
  font: 400 24px/36px ${UI};
`;

const SymbolItem = styled.li`
  display: flex;
  align-items: center;
  gap: 12px;
  height: 36px;
  padding-left: ${(p) => (p.$child ? 86 : 14)}px;
  ${(p) => !p.$child && "background: #efefef; font-weight: 700;"}

  ${Triangle} {
    margin-right: 4px;
  }
`;

const ButtonGrid = styled.div`
  display: grid;
  grid-template-columns: 48px 48px;
  align-content: start;
  gap: 8px 12px;
`;

const Rule = styled.hr`
  width: 100%;
  height: 3px;
  margin: ${(p) => p.$top}px 0 ${(p) => p.$bottom}px;
  border: solid #a0a0a0;
  border-width: 1px 0 0;
  background: #fff;
`;

const Inset = styled.div`
  display: flex;
  flex: 1;
  flex-direction: column;
  min-height: 0;
  padding-right: 18px;
`;

const Field = styled.div`
  display: flex;
  align-items: center;
  height: 43px;
  margin-bottom: 17px;

  > label {
    flex: 0 0 108px;
    padding-top: 2px;
    white-space: nowrap;
  }
`;

const ColorButton = styled.button`
  ${raised}
  flex: 1;
  height: 43px;
  padding: 4px 8px;
  background: #fdfdfd;

  span {
    display: block;
    height: 32px;
    border-radius: 5px;
    background: ${FILL};
  }
`;

const Slider = styled.input`
  flex: 1;
  min-width: 0;
  height: 28px;
  appearance: none;
  background: linear-gradient(#005a9e 2px, #1888e6 2px 8px, #005a9e 8px) center / 100% 10px no-repeat;

  &::-webkit-slider-thumb {
    width: 26px;
    height: 27px;
    appearance: none;
    border: 2px solid #aeaeae;
    border-radius: 5px;
    background: #fff;
  }
`;

const SpinBox = styled.span`
  display: flex;
  flex: none;
  width: ${(p) => p.$width}px;
  height: 40px;
  border: 2px solid #aeaeae;
  border-radius: 6px;
  overflow: hidden;
  background: #fff;

  input {
    flex: 1;
    min-width: 0;
    padding: 2px 8px 0;
    border: 0;
    outline: 0;
    background: none;
    font: 400 ${(p) => p.$font || 20}px/32px ${FORM};
  }
`;

const SpinButtons = styled.span`
  display: flex;
  flex-direction: column;
  width: 28px;
  border-left: 2px solid #b8b8b8;
  background: #f4f4f4;

  button {
    flex: 1;
  }
`;

function Spin({ id, value, label, top = "#555", ...rest }) {
  return (
    <SpinBox {...rest}>
      <input id={id} defaultValue={value} aria-label={label} />
      <SpinButtons>
        <PlainButton aria-label="增加"><Triangle $turn={180} $color={top} /></PlainButton>
        <PlainButton aria-label="减少"><Triangle /></PlainButton>
      </SpinButtons>
    </SpinBox>
  );
}

const Space = styled.span`
  flex: 0 0 ${(p) => p.$width}px;
`;

const OverrideButton = styled(PlainButton)`
  width: 72px;
  height: 40px;
  padding-left: 8px;
`;

const SearchRow = styled.div`
  display: flex;
  align-items: center;
  gap: 22px;
  padding-right: 8px;
  margin-bottom: 9px;
`;

const SearchBox = styled.div`
  display: flex;
  flex: 1;
  align-items: center;
  gap: 14px;
  height: 44px;
  padding-left: 20px;
  border: 2px solid #aeaeae;
  border-radius: 6px;
  background: #fff;

  input {
    flex: 1;
    min-width: 0;
    padding: 0;
    border: 0;
    outline: 0;
    background: none;
    font: 300 24px/32px ${FORM};
  }
`;

const DropPart = styled(PlainButton)`
  align-self: stretch;
  width: 40px;
  border-left: 1px solid #b8b8b8;
  background: linear-gradient(#fefefe, #ededed);
`;

const SymbolList = styled(Frame)`
  display: flex;
  flex: 1 1 0;
  min-height: 0;
  border-width: 1px;
  font: 400 24px/32px ${UI};
`;

const SymbolScroll = styled(Scroll)`
  flex: 0 0 28px;
`;

const SymbolArea = styled.div`
  flex: 1;
  padding: 0 14px 0 11px;
  overflow: hidden;

  h3 {
    height: 52px;
    margin: 0;
    border-bottom: 3px solid #c8c8c8;
    font-size: 33px;
    line-height: 64px;
  }
`;

const SymbolCells = styled.div`
  display: grid;
  grid-template-columns: 248px 270px;
  padding-top: 42px;

  figure {
    display: flex;
    flex-direction: column;
    align-items: center;
    height: 283px;
    margin: 0;
  }

  figcaption {
    margin-top: 64px;
    white-space: pre;
  }
`;

const Actions = styled.div`
  display: flex;
  align-items: center;
  gap: 12px;
  height: 46px;
  margin-top: ${(p) => p.$top}px;
`;

const ListView = styled(PlainButton)`
  margin-left: -2px;
`;

const Rendering = styled(PlainButton)`
  justify-content: flex-start;
  gap: 18px;
  height: 32px;
  margin-top: 42px;
  padding-left: 6px;
  font: 500 24px/32px ${UI};
`;

const Advanced = styled(PushButton)`
  position: relative;

  ${Triangle} {
    position: absolute;
    right: 8px;
  }
`;

const CheckLabel = styled.label`
  display: flex;
  align-items: center;
  gap: 11px;
  white-space: nowrap;
`;

const tabIcons = ["brush", "labels", "abc", "cube", "terrain", "brushes", "history"];

function Hatch({ back }) {
  const lines = [-108, -81, -54, -27, 0, 27, 54, 81, 108];
  return (
    <svg width="126" height="109" fill="none" stroke="#000">
      {lines.map((v) => (
        <path key={v} d={back ? `M${v} 0l110 109` : `M${v + 20} 109L${v + 130} 0`} strokeWidth="3" />
      ))}
      <rect x="2" y="2" width="122" height="105" strokeWidth="4" />
    </svg>
  );
}

function Plasma() {
  return (
    <svg width="127" height="109">
      <defs>
        <radialGradient id="plasma" cx="0" cy="0" r="1.414">
          <stop offset="0" stopColor="#0d0887" />
          <stop offset=".25" stopColor="#8405a7" />
          <stop offset=".47" stopColor="#c8407a" />
          <stop offset=".7" stopColor="#f4844c" />
          <stop offset=".87" stopColor="#feb72c" />
          <stop offset="1" stopColor="#f0f921" />
        </radialGradient>
      </defs>
      <rect x="1" y="1" width="125" height="107" fill="url(#plasma)" stroke="#000" strokeWidth="3" />
    </svg>
  );
}

function Styling() {
  const [tab, setTab] = useState(0);

  return (
    <StyleDock>
      <DockSplitter><Dots $tall /></DockSplitter>
      <StylePanel>
        <DockHead title="图层样式" $left={2} $right={0} />
        <TopCombo><Combo label="图层" value="北京市" icon="polygon" /></TopCombo>
        <StyleBody>
          <Tabs role="tablist">
            {tabIcons.map((n, i) => (
              <Tab key={n} role="tab" aria-label={n} $on={tab === i} onClick={() => setTab(i)}>
                <Icon name={n} size={42} />
              </Tab>
            ))}
          </Tabs>
          <Form>
            <Combo label="符号类型" value="单一符号" icon="single" />
            <SymbolRow>
              <Preview><span /></Preview>
              <SymbolTree>
                <SymbolItem><Triangle /><Swatch />填充</SymbolItem>
                <SymbolItem $child><Swatch />简单填充</SymbolItem>
              </SymbolTree>
              <ButtonGrid>
                {["plus", "up", "minus", "down", "dup", "unlock"].map((n, i) => (
                  <PushButton key={n} aria-label={n} disabled={i > 0}>
                    <Icon name={n} size={28} dim={i > 0} />
                  </PushButton>
                ))}
              </ButtonGrid>
            </SymbolRow>
            <Rule $top={14} $bottom={15} />
            <Inset>
              <Field>
                <label htmlFor="fill-color">颜色</label>
                <ColorButton id="fill-color"><span /></ColorButton>
                <PushButton $width={24} $height={43} aria-label="颜色菜单"><Triangle /></PushButton>
              </Field>
              <Field>
                <label htmlFor="opacity">不透明度</label>
                <Slider id="opacity" type="range" defaultValue="100" />
                <Space $width={7} />
                <Spin $width={200} value="100.0 %" label="不透明度值" top="#a8a8a8" />
                <OverrideButton aria-label="数据定义"><Icon name="override" size={38} /></OverrideButton>
              </Field>
              <Field>
                <label htmlFor="unit">单位</label>
                <Combo id="unit" value="毫米" $height={43} $grow />
              </Field>
              <Rule $top={-7} $bottom={10} />
              <SearchRow>
                <SearchBox>
                  <Icon name="lens" size={24} />
                  <input aria-label="搜索符号" defaultValue="收藏夹" />
                  <PlainButton aria-label="清除"><Icon name="clear" size={25} /></PlainButton>
                  <DropPart aria-label="选择分组"><Triangle /></DropPart>
                </SearchBox>
                <PlainButton aria-label="样式管理器"><Icon name="styles" size={30} /></PlainButton>
              </SearchRow>
              <SymbolList>
                <SymbolArea>
                  <h3>工程样式</h3>
                  <h3>默认</h3>
                  <SymbolCells>
                    <figure>
                      <Plasma />
                      <figcaption>gradient   plasma</figcaption>
                    </figure>
                    <figure>
                      <svg width="126" height="109"><rect x="2" y="2" width="122" height="105" fill="#969696" /></svg>
                      <figcaption>gray 3 fill</figcaption>
                    </figure>
                    <figure><Hatch /></figure>
                    <figure><Hatch back /></figure>
                  </SymbolCells>
                </SymbolArea>
                <SymbolScroll>
                  <ScrollButton $size={28} aria-label="向上"><Triangle $turn={180} /></ScrollButton>
                  <Thumb $part={21} />
                  <Gap />
                  <ScrollButton $size={28} aria-label="向下"><Triangle /></ScrollButton>
                </SymbolScroll>
              </SymbolList>
              <Actions $top={13}>
                <PushButton $pressed aria-label="图标视图"><Icon name="grid" size={28} /></PushButton>
                <ListView aria-label="列表视图"><Icon name="table" size={28} /></ListView>
                <Gap />
                <PushButton $width={160} $height={40}>保存符号⋯</PushButton>
                <Advanced $width={159} $height={40}>高级<Triangle $size={6} /></Advanced>
              </Actions>
              <Rendering><Triangle $turn={-90} $size={11} $color="#333" />图层渲染</Rendering>
            </Inset>
            <Actions $top={16}>
              <PushButton aria-label="撤销"><Icon name="undo" size={26} /></PushButton>
              <PushButton aria-label="重做"><Icon name="redo" size={26} /></PushButton>
              <Gap />
              <CheckLabel><Check />实时更新</CheckLabel>
              <Space $width={10} />
              <PushButton $width={160} $height={40}>应用</PushButton>
            </Actions>
          </Form>
        </StyleBody>
      </StylePanel>
    </StyleDock>
  );
}

/* ---------- status bar ---------- */

const Status = styled.footer`
  display: flex;
  align-items: center;
  height: 57px;
  padding: 2px 14px 0 9px;
  font: 300 22px/32px ${FORM};
  white-space: nowrap;
`;

const StatusLabel = styled.label`
  margin: 0 ${(p) => p.$right || 8}px 0 ${(p) => p.$left || 0}px;
  padding-top: 2px;
`;

const StatusInput = styled.span`
  display: flex;
  align-items: center;
  width: ${(p) => p.$width}px;
  height: 43px;
  padding-left: ${(p) => p.$left || 8}px;
  border: 2px solid #aeaeae;
  border-radius: 6px;
  background: #fff;

  input {
    flex: 1;
    min-width: 0;
    padding: 2px 0 0;
    border: 0;
    outline: 0;
    background: none;
    font: 400 ${(p) => p.$font || 18}px/32px ${FORM};
  }

  input::placeholder {
    color: #888;
  }
`;

const StatusIcon = styled(PlainButton)`
  width: ${(p) => p.$width}px;
`;

const Messages = styled(PlainButton)`
  margin-left: 56px;
`;

const Crs = styled(PlainButton)`
  gap: 4px;
  margin-left: 31px;
  font: 400 18px/32px ${FORM};
`;

const SearchIcon = styled.span`
  margin-right: 14px;
`;

function StatusBar() {
  return (
    <Status>
      <StatusInput $width={400} $left={16} $font={20}>
        <SearchIcon><Icon name="lens" size={24} /></SearchIcon>
        <input placeholder="搜索 (Ctrl+K)" aria-label="搜索" />
      </StatusInput>
      <Gap />
      <StatusLabel htmlFor="coord">坐标</StatusLabel>
      <StatusInput $width={227}><input id="coord" defaultValue="40.421° , 117.562°" /></StatusInput>
      <StatusIcon $width={48} aria-label="范围"><Icon name="extents" size={32} /></StatusIcon>
      <StatusLabel htmlFor="scale" $left={20}>比例</StatusLabel>
      <StatusInput $width={164}>
        <input id="scale" defaultValue="1:607124" />
        <DropPart aria-label="比例列表"><Triangle /></DropPart>
      </StatusInput>
      <StatusIcon $width={68} aria-label="锁定比例"><Icon name="lock" size={28} /></StatusIcon>
      <StatusLabel htmlFor="zoom">放大镜</StatusLabel>
      <Spin id="zoom" $width={176} $font={18} value="100%" />
      <StatusLabel htmlFor="turn" $left={20} $right={18}>旋转角度</StatusLabel>
      <Spin id="turn" $width={178} $font={18} value="0.0°" />
      <Space $width={12} />
      <CheckLabel><Check />渲染</CheckLabel>
      <Crs><Icon name="crs" size={30} />EPSG:4326</Crs>
      <Messages aria-label="消息"><Icon name="bubble" size={32} /></Messages>
    </Status>
  );
}

/* ---------- marks drawn over the window ---------- */

const Marks = styled.svg`
  position: absolute;
  top: 0;
  right: 0;
  width: 1300px;
  height: 1719px;
  pointer-events: none;
  font-family: ${UI};
`;

function Overlay() {
  return (
    <Marks viewBox="1580 0 1300 1719">
      <g fill="#fb3838">
        <path d="M1628 387L2021 382v-5l17 9-17 8v-4z" />
        <path d="M2360 470l-4 193h4l-9 17-8-17h5z" />
        <text x="1970" y="431" fontSize="50">1</text>
        <text x="2374" y="646" fontSize="48">2 这里可以自定义颜</text>
      </g>
      <g fill="none" stroke="#fb3838" strokeWidth="3">
        <rect x="2047" y="351" width="102" height="70" />
        <rect x="2216" y="687" width="662" height="76" />
      </g>
      <g fill="#a8a8a8" fillOpacity=".8">
        <text x="2362" y="1588" fontSize="41">激活 Windows</text>
        <text x="2362" y="1628" fontSize="29">转到“设置”以激活 Windows。</text>
      </g>
      <text x="2760" y="1709" fontSize="14" fontFamily="Liberation Sans, sans-serif" fill="#8a8a8a">CSDN @H_HX126</text>
    </Marks>
  );
}

function App() {
  return (
    <>
      <GlobalStyle />
      <Page>
        <WindowTop />
        <Main>
          <Docks />
          <Splitter><Dots $tall /></Splitter>
          <MapCanvas />
          <Styling />
        </Main>
        <StatusBar />
        <Overlay />
      </Page>
    </>
  );
}

export default App;
